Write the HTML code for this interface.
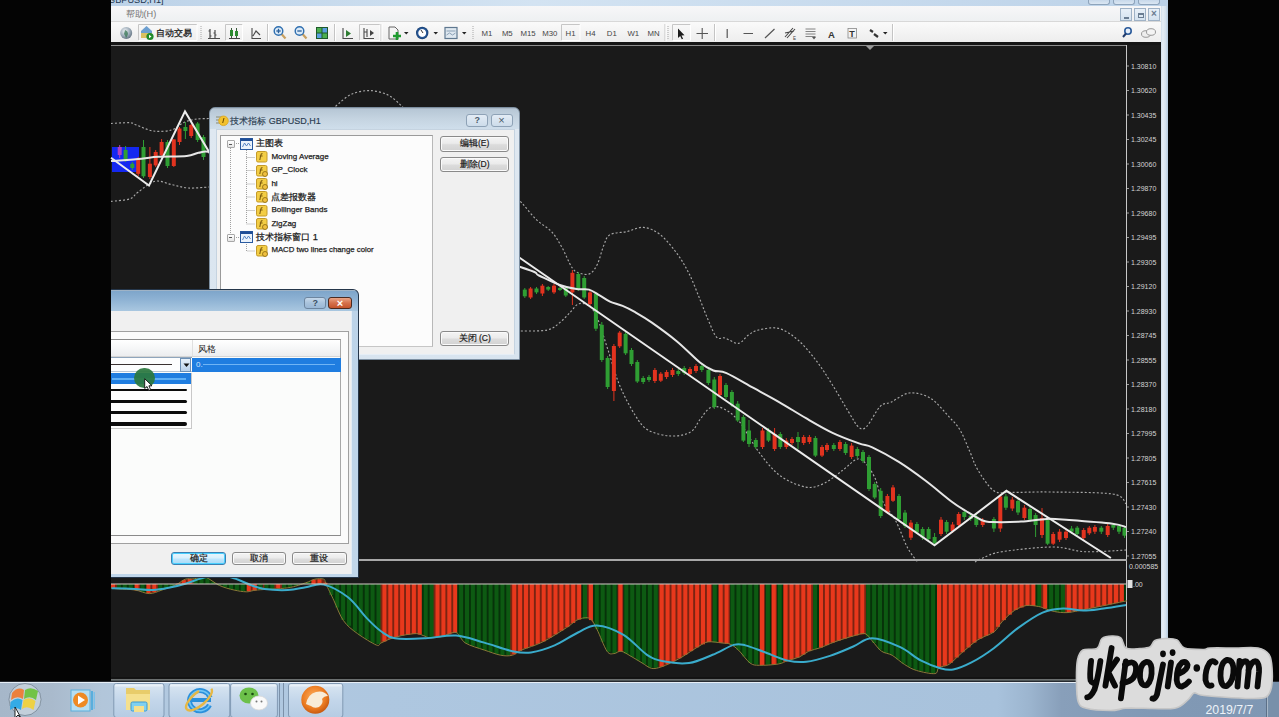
<!DOCTYPE html>
<html><head><meta charset="utf-8">
<style>
*{margin:0;padding:0;box-sizing:border-box}
html,body{width:1279px;height:717px;overflow:hidden;background:#040404;font-family:"Liberation Sans",sans-serif;position:relative}
.a{position:absolute}
#win{left:111px;top:0;width:1057px;height:681px;background:#cddeee;overflow:hidden}
#title{left:0;top:0;width:1057px;height:7px;background:linear-gradient(90deg,#bcd2e8,#d3e3f2 40%,#c4d8ec 80%,#bcd2e8)}
#menu{left:0;top:6px;width:1050px;height:16px;background:linear-gradient(#f7f7f8,#eef0f2);border-bottom:1px solid #d8d8d8}
#tool{left:0;top:22px;width:1050px;height:20px;background:linear-gradient(#fafafa,#ededed)}
#chartwin{left:0;top:42px;width:1050px;height:639px;background:#1a1a1a;border-top:3px solid #151515}
#rframe{left:1049px;top:6px;width:8px;height:675px;background:linear-gradient(90deg,#c4d5e5,#e6eef5 35%,#d5e2ee 70%,#b4c9dd)}
.tb{font-size:8px;color:#505050}
.tbtn{border:1px solid #c9c9c9;background:linear-gradient(#fbfbfb,#eeeeee)}
.sep{width:1px;height:16px;background:#c2c2c2;border-right:1px solid #fff}
.dlg{border:1px solid #5e6f80;border-radius:6px 6px 0 0;overflow:hidden}
.btn{border:1px solid #8a8a8a;border-radius:3px;background:linear-gradient(#f4f4f4 0%,#ebebeb 45%,#dcdcdc 55%,#d2d2d2 100%);font-size:8.5px;color:#202020;text-align:center;line-height:13px;-webkit-text-stroke:0.2px #202020;box-shadow:inset 0 0 0 1px #fafafa}
.row{font-size:8px;color:#1e1e1e;line-height:10px;white-space:nowrap;-webkit-text-stroke:0.25px #1e1e1e}
#taskbar{left:0;top:681px;width:1279px;height:36px;background:linear-gradient(90deg,#a6b7c9 0%,#a9bacc 4%,#b2c6da 8%,#b2c9e0 12%,#aec7e0 30%,#a8c2dc 78%,#9cb5cf 80.5%,#889fba 83%,#8199b5 90%,#7f97b3 100%);border-top:1px solid #e8eef5}
.tbb{top:684px;height:33px;border:1px solid #8aa0b8;border-radius:3px;background:linear-gradient(#d5e3f0,#b8cde2)}
</style></head>
<body>
<div id="win" class="a">
  <div id="title" class="a"></div>
  <div class="a" style="left:-3px;top:-5px;font-size:9.2px;color:#223650;white-space:nowrap">GBPUSD,H1]</div>
  <div class="a" style="left:977px;top:0;width:22px;height:5px;border:1px solid #8ea4bb;border-top:0;border-radius:0 0 3px 3px;background:linear-gradient(#c7d8ea,#dbe7f3)"></div>
  <div class="a" style="left:1002px;top:0;width:22px;height:5px;border:1px solid #8ea4bb;border-top:0;border-radius:0 0 3px 3px;background:linear-gradient(#c7d8ea,#dbe7f3)"></div>
  <div class="a" style="left:1027px;top:0;width:22px;height:5px;border:1px solid #8ea4bb;border-top:0;border-radius:0 0 3px 3px;background:linear-gradient(#c7d8ea,#dbe7f3)"></div>
  <div id="rframe" class="a"></div>
  <div id="menu" class="a"></div>
  <div class="a" style="left:14.5px;top:8.3px;font-size:9.2px;color:#767676">帮助(H)</div>
  <div class="a" style="left:1009px;top:8px;width:12px;height:13px;border:1px solid #9fb2c6;background:linear-gradient(#e8f0f8,#d4e2ef)"><div class="a" style="left:3px;top:8px;width:5px;height:2px;background:#6a7d92"></div></div>
  <div class="a" style="left:1023px;top:8px;width:12px;height:13px;border:1px solid #9fb2c6;background:linear-gradient(#e8f0f8,#d4e2ef)"><div class="a" style="left:3px;top:4px;width:6px;height:5px;border:1px solid #6a7d92;border-top-width:2px"></div></div>
  <div class="a" style="left:1037px;top:8px;width:12px;height:13px;border:1px solid #9fb2c6;background:linear-gradient(#e8f0f8,#d4e2ef);font-size:10px;line-height:10px;text-align:center;color:#6a7d92;font-weight:bold">×</div>
  <div id="tool" class="a"></div>
  
  <div id="chartwin" class="a"></div>
</div>
<svg class="a" style="left:0;top:0" width="1279" height="46" viewBox="0 0 1279 46">
<path d="M138.5,40.5 V24.5 H197" fill="none" stroke="#c6c6c6" stroke-width="1"/>
<path d="M197,24.5 V40.5 H138.5" fill="none" stroke="#ffffff" stroke-width="1"/>
<path d="M225.5,40.5 V24.5 H242.5" fill="none" stroke="#c6c6c6" stroke-width="1"/>
<path d="M242.5,24.5 V40.5 H225.5" fill="none" stroke="#ffffff" stroke-width="1"/>
<path d="M359.5,40.5 V24.5 H380" fill="none" stroke="#c6c6c6" stroke-width="1"/>
<path d="M380,24.5 V40.5 H359.5" fill="none" stroke="#ffffff" stroke-width="1"/>
<path d="M561.5,40.5 V24.5 H580" fill="none" stroke="#c6c6c6" stroke-width="1"/>
<path d="M580,24.5 V40.5 H561.5" fill="none" stroke="#ffffff" stroke-width="1"/>
<path d="M672.5,40.5 V24.5 H690.5" fill="none" stroke="#c6c6c6" stroke-width="1"/>
<path d="M690.5,24.5 V40.5 H672.5" fill="none" stroke="#ffffff" stroke-width="1"/>
<line x1="267.5" y1="24" x2="267.5" y2="41" stroke="#c4c4c4"/><line x1="268.5" y1="24" x2="268.5" y2="41" stroke="#fff"/>
<line x1="334.5" y1="24" x2="334.5" y2="41" stroke="#c4c4c4"/><line x1="335.5" y1="24" x2="335.5" y2="41" stroke="#fff"/>
<line x1="381" y1="24" x2="381" y2="41" stroke="#c4c4c4"/><line x1="382" y1="24" x2="382" y2="41" stroke="#fff"/>
<line x1="665" y1="24" x2="665" y2="41" stroke="#c4c4c4"/><line x1="666" y1="24" x2="666" y2="41" stroke="#fff"/>
<line x1="714.5" y1="24" x2="714.5" y2="41" stroke="#c4c4c4"/><line x1="715.5" y1="24" x2="715.5" y2="41" stroke="#fff"/>
<line x1="892.5" y1="24" x2="892.5" y2="41" stroke="#c4c4c4"/><line x1="893.5" y1="24" x2="893.5" y2="41" stroke="#fff"/>
<line x1="201" y1="26" x2="201" y2="40" stroke="#a8a8a8" stroke-dasharray="1 1"/>
<line x1="473" y1="26" x2="473" y2="40" stroke="#a8a8a8" stroke-dasharray="1 1"/>
<line x1="668" y1="26" x2="668" y2="40" stroke="#a8a8a8" stroke-dasharray="1 1"/>
<defs><radialGradient id="glb" cx="0.4" cy="0.35" r="0.7"><stop offset="0" stop-color="#f2f5f8"/><stop offset="0.6" stop-color="#9aa9b6"/><stop offset="1" stop-color="#5e6e7c"/></radialGradient><radialGradient id="clk" cx="0.5" cy="0.5" r="0.5"><stop offset="0.55" stop-color="#ffffff"/><stop offset="0.7" stop-color="#2a5a9a"/><stop offset="1" stop-color="#163e72"/></radialGradient></defs>
<circle cx="126.2" cy="33" r="6" fill="url(#glb)"/><path d="M125,30 q3,1 3,4 q-1,3 -2,4 q-1,-3 -2,-4 z" fill="#3d7a5a" opacity="0.8"/>
<path d="M141,31 l5.5,-5 l5.5,5 v6 h-11 z" fill="#6c9fd0"/><path d="M141,33 h11 v5 h-11z" fill="#d9c060"/><circle cx="150" cy="36.5" r="3.6" fill="#1f8a2a"/><path d="M149,34.8 l2.5,1.7 l-2.5,1.7z" fill="#fff"/>
<text x="156" y="36.3" font-size="9.2" font-weight="bold" fill="#333" font-family="Liberation Sans">自动交易</text>
<g stroke="#4a4a4a" stroke-width="1.2" fill="none"><path d="M210,29 v9 M208.5,31 h1.5 M210,36 h1.5 M215,30 v8 M213.5,33 h1.5 M215,35 h1.5 M208,38.5 h12"/></g>
<g stroke="#3a5a3a" stroke-width="1"><path d="M231.5,28 v11 M236.5,28 v11"/></g><rect x="230" y="30" width="3" height="6" fill="#2b8a2f"/><rect x="235" y="31" width="3" height="5" fill="#2b8a2f"/><path d="M229,38.5 h11" stroke="#444"/>
<path d="M252,28 v10.5 h9 M253,36 l3,-5 l4,4" fill="none" stroke="#4a4a4a" stroke-width="1.1"/>
<line x1="281.5" y1="34" x2="285.5" y2="38.5" stroke="#c8a060" stroke-width="2.2"/>
<circle cx="278.5" cy="31" r="4.3" fill="#dbeaf7" stroke="#2f6fb0" stroke-width="1.4"/>
<path d="M276.3,31 h4.4" stroke="#2a5f9a" stroke-width="1.3"/>
<path d="M278.5,28.8 v4.4" stroke="#2a5f9a" stroke-width="1.3"/>
<line x1="302.5" y1="34" x2="306.5" y2="38.5" stroke="#c8a060" stroke-width="2.2"/>
<circle cx="299.5" cy="31" r="4.3" fill="#dbeaf7" stroke="#2f6fb0" stroke-width="1.4"/>
<path d="M297.3,31 h4.4" stroke="#2a5f9a" stroke-width="1.3"/>
<rect x="316" y="27" width="12" height="12" fill="#1e5a2a"/><rect x="317" y="28" width="4.5" height="4.5" fill="#4caf50"/><rect x="322.5" y="28" width="4.5" height="4.5" fill="#5aa0e0"/><rect x="317" y="33.5" width="4.5" height="4.5" fill="#5aa0e0"/><rect x="322.5" y="33.5" width="4.5" height="4.5" fill="#4caf50"/>
<path d="M343,28 v10.5 h10" fill="none" stroke="#4a4a4a" stroke-width="1.1"/><path d="M346,30 l5,3.5 l-5,3.5z" fill="#2e7d32"/>
<path d="M364,28 v10.5 h10 M367,29 v8 M364.5,32 h2.5" fill="none" stroke="#4a4a4a" stroke-width="1.1"/><path d="M370,30 l4,3 l-4,3z" fill="#444"/>
<path d="M389,27 h6 l3,3 v9 h-9z" fill="#f4f4f4" stroke="#666" stroke-width="1"/><path d="M397,32 v8 M393,36 h8" stroke="#1f9a2f" stroke-width="2.6"/>
<path d="M404,32 h4.5 l-2.25,2.5z" fill="#222"/>
<path d="M433.5,32 h4.5 l-2.25,2.5z" fill="#222"/>
<path d="M462,32 h4.5 l-2.25,2.5z" fill="#222"/>
<circle cx="422.2" cy="33" r="6.2" fill="url(#clk)"/><path d="M421,30 l2,3" stroke="#333" stroke-width="1"/>
<rect x="445" y="27.5" width="12" height="11" fill="#dfe8f0" stroke="#5f7890" stroke-width="1.2"/><path d="M446.5,31 h9 M446.5,35 l3,-2 l3,2 l3,-2" stroke="#8aa0b5" stroke-width="1" fill="none"/>
<g font-family="Liberation Sans" font-size="7.8" fill="#454545" text-anchor="middle">
<text x="487" y="36">M1</text>
<text x="507.3" y="36">M5</text>
<text x="528" y="36">M15</text>
<text x="549.8" y="36">M30</text>
<text x="570.6" y="36">H1</text>
<text x="590.6" y="36">H4</text>
<text x="611.8" y="36">D1</text>
<text x="633.3" y="36">W1</text>
<text x="653.6" y="36">MN</text>
</g>
<path d="M678,28.5 l0,9.5 l2.2,-2 l1.6,3.3 l1.3,-0.6 l-1.6,-3.2 l3,-0.2z" fill="#1c1c1c"/>
<path d="M702.2,28 v11 M696.5,33.5 h11.5" stroke="#555" stroke-width="1.1"/>
<path d="M727.2,29 v9 M743.5,33.5 h9.5 M765,38 l9.5,-9" stroke="#555" stroke-width="1.2" fill="none"/>
<path d="M785,37 l8,-9 M787,38 l8,-9 M785,33 l9,-2" stroke="#444" stroke-width="1.1"/><text x="793" y="40" font-size="4.5" fill="#444" font-family="Liberation Sans">E</text>
<path d="M805.5,29 h10 M805.5,31.5 h10 M805.5,34 h10 M805.5,36.5 h10" stroke="#777" stroke-width="0.9"/><path d="M812,37 h4 l-2,2.5z" fill="#555"/>
<text x="828" y="37.5" font-size="9.5" font-weight="bold" fill="#333" font-family="Liberation Sans">A</text>
<rect x="848" y="28.5" width="8.5" height="9.5" fill="none" stroke="#888" stroke-width="0.8"/><text x="849.3" y="37" font-size="9" font-weight="bold" fill="#333" font-family="Liberation Sans">T</text>
<path d="M870,30 l3,2 M874,34 l4,3" stroke="#333" stroke-width="2.2"/><path d="M883,32 h4.5 l-2.25,2.5z" fill="#222"/>
<circle cx="1128" cy="31" r="3.2" fill="#e8f0fa" stroke="#2a5a9a" stroke-width="1.6"/><line x1="1126" y1="33.5" x2="1123" y2="37" stroke="#203a6a" stroke-width="2"/>
<ellipse cx="1146" cy="34" rx="4.5" ry="3.3" fill="#eee" stroke="#999" stroke-width="1"/><ellipse cx="1151" cy="32" rx="4.5" ry="3.3" fill="#f4f4f4" stroke="#999" stroke-width="1"/>
</svg>
<svg class="a" style="left:0;top:0" width="1279" height="717" viewBox="0 0 1279 717">
<path d="M111.0,123.5 C114.1,123.4 125.6,122.5 129.8,122.7 C134.1,123.0 132.6,123.6 136.5,125.0 C140.4,126.4 147.3,130.2 153.2,131.0 C159.0,131.8 166.6,131.4 171.6,130.0 C176.6,128.6 179.5,124.5 183.4,122.7 C187.3,120.9 190.7,120.0 195.0,119.3 C199.3,118.6 206.7,118.6 209.0,118.5" fill="none" stroke="#a8a8a8" stroke-width="1.15" stroke-dasharray="2 2"/>
<path d="M330.0,112.0 C331.4,110.7 334.6,106.9 338.3,103.9 C342.0,100.9 346.7,96.2 352.0,94.0 C357.3,91.8 364.2,90.4 370.2,90.6 C376.2,90.8 382.9,92.6 388.0,95.0 C393.1,97.4 397.1,101.9 400.8,105.2 C404.5,108.5 408.5,113.4 410.0,115.0" fill="none" stroke="#a8a8a8" stroke-width="1.15" stroke-dasharray="2 2"/>
<path d="M509.0,190.0 C511.2,192.2 517.6,198.4 522.2,203.4 C526.8,208.4 531.9,215.4 536.8,220.1 C541.7,224.8 547.3,227.1 551.5,231.6 C555.7,236.1 558.4,241.2 561.9,247.3 C565.4,253.4 569.2,263.8 572.4,268.2 C575.5,272.6 577.8,272.6 580.8,273.5 C583.8,274.4 587.4,275.1 590.2,273.5 C593.0,271.9 595.2,268.7 597.5,264.0 C599.8,259.3 601.7,250.1 603.8,245.2 C605.9,240.3 606.2,237.0 610.0,234.7 C613.8,232.4 621.2,232.8 626.8,231.6 C632.4,230.4 637.9,226.9 643.5,227.4 C649.1,227.9 654.7,230.3 660.3,234.7 C665.9,239.1 672.1,247.0 677.0,253.6 C681.9,260.2 685.7,266.8 689.5,274.5 C693.3,282.2 696.9,291.9 700.0,299.6 C703.1,307.3 705.6,314.2 708.4,320.5 C711.2,326.8 713.9,334.4 716.7,337.3 C719.5,340.2 721.4,337.0 725.0,338.0 C728.6,339.0 734.5,343.9 738.4,343.4 C742.3,342.9 745.0,337.2 748.4,335.0 C751.8,332.8 753.5,331.1 758.5,330.0 C763.5,328.9 772.0,326.7 778.6,328.4 C785.2,330.1 791.7,334.5 798.0,340.0 C804.3,345.5 810.9,353.7 816.6,361.2 C822.4,368.7 827.2,376.6 832.5,385.0 C837.8,393.4 844.0,404.5 848.4,411.6 C852.8,418.7 855.9,425.1 859.0,427.5 C862.1,429.9 863.5,429.6 867.0,426.1 C870.5,422.6 876.2,410.3 880.2,406.3 C884.2,402.3 885.9,404.5 890.8,402.3 C895.7,400.1 902.8,393.7 909.4,393.0 C916.0,392.3 924.0,394.3 930.6,398.3 C937.2,402.3 944.2,411.6 949.1,416.9 C954.0,422.2 956.5,424.1 960.0,430.0 C963.5,435.9 967.0,445.3 970.0,452.0 C973.0,458.7 973.9,463.5 977.9,470.0 C981.9,476.5 988.3,487.1 993.9,490.8 C999.5,494.5 1002.1,492.2 1011.5,492.4 C1020.9,492.6 1033.2,491.7 1050.0,492.0 C1066.8,492.3 1099.8,492.1 1112.5,494.0 C1125.2,495.9 1123.8,502.1 1126.0,503.7" fill="none" stroke="#a8a8a8" stroke-width="1.15" stroke-dasharray="2 2"/>
<path d="M111.0,201.4 C114.1,201.0 125.3,200.4 129.8,198.9 C134.3,197.4 133.8,195.1 138.0,192.2 C142.2,189.3 149.4,182.6 155.0,181.3 C160.6,180.0 166.0,183.5 171.6,184.6 C177.2,185.7 182.2,187.6 188.4,188.0 C194.6,188.4 205.6,187.2 209.0,187.0" fill="none" stroke="#a8a8a8" stroke-width="1.15" stroke-dasharray="2 2"/>
<path d="M509.0,331.0 C511.2,331.0 515.8,331.2 522.2,331.0 C528.6,330.8 541.0,331.4 547.3,330.0 C553.6,328.6 556.0,325.6 559.8,322.6 C563.6,319.6 567.1,315.3 570.3,312.2 C573.4,309.1 575.6,304.9 578.7,303.8 C581.8,302.8 586.0,303.5 589.1,305.9 C592.2,308.3 594.4,311.0 597.5,318.4 C600.6,325.8 604.3,338.9 608.0,350.0 C611.7,361.1 615.0,374.2 619.5,385.0 C624.0,395.8 630.2,407.5 635.0,415.0 C639.8,422.5 642.0,426.5 648.0,430.0 C654.0,433.5 663.9,435.7 671.0,436.0 C678.1,436.3 685.8,434.8 690.6,432.0 C695.4,429.2 696.7,423.6 700.0,419.5 C703.3,415.4 706.6,409.4 710.6,407.6 C714.6,405.8 719.0,406.5 723.9,408.9 C728.8,411.3 734.1,415.1 739.8,422.2 C745.5,429.3 751.7,442.5 758.3,451.3 C764.9,460.1 771.5,469.2 779.5,475.2 C787.5,481.2 798.5,485.8 806.0,487.1 C813.5,488.4 818.4,486.0 824.6,483.1 C830.8,480.2 837.8,473.9 843.1,469.9 C848.4,465.9 852.9,460.6 856.4,459.3 C859.9,458.0 861.2,458.8 864.3,461.9 C867.4,465.0 871.9,471.3 874.9,477.8 C877.9,484.3 878.9,493.6 882.4,500.8 C885.9,508.0 891.6,513.2 895.8,521.0 C900.0,528.8 903.9,540.9 907.5,547.7 C911.1,554.5 915.9,559.6 917.6,562.0" fill="none" stroke="#a8a8a8" stroke-width="1.15" stroke-dasharray="2 2"/>
<path d="M975.0,562.0 C976.3,561.3 978.2,559.7 982.7,558.0 C987.2,556.3 990.3,553.5 1002.0,551.7 C1013.7,549.9 1039.2,547.0 1053.0,547.0 C1066.8,547.0 1072.8,551.2 1085.0,551.7 C1097.2,552.2 1119.2,550.3 1126.0,550.0" fill="none" stroke="#a8a8a8" stroke-width="1.15" stroke-dasharray="2 2"/>
<rect x="112" y="147" width="27" height="25" fill="#1428f0"/>
<line x1="119.7" y1="145" x2="119.7" y2="158" stroke="#b040c0" stroke-width="1"/>
<rect x="117.7" y="147" width="4" height="8.0" fill="#b040c0"/>
<line x1="125.6" y1="146" x2="125.6" y2="162" stroke="#2f9e33" stroke-width="1"/>
<rect x="123.6" y="150" width="4" height="10.0" fill="#2f9e33"/>
<line x1="132.3" y1="162" x2="132.3" y2="170" stroke="#2f9e33" stroke-width="1"/>
<rect x="130.3" y="163.7" width="4" height="4.3" fill="#2f9e33"/>
<line x1="138.2" y1="157" x2="138.2" y2="176" stroke="#e2331f" stroke-width="1"/>
<rect x="136.2" y="158.7" width="4" height="15.1" fill="#e2331f"/>
<line x1="143.5" y1="140" x2="143.5" y2="178" stroke="#2f9e33" stroke-width="1"/>
<rect x="141.5" y="147" width="4" height="29.3" fill="#2f9e33"/>
<line x1="149.9" y1="147" x2="149.9" y2="179" stroke="#e2331f" stroke-width="1"/>
<rect x="147.9" y="163.7" width="4" height="13.3" fill="#e2331f"/>
<line x1="155.7" y1="150" x2="155.7" y2="167" stroke="#e2331f" stroke-width="1"/>
<rect x="153.7" y="152" width="4" height="13.4" fill="#e2331f"/>
<line x1="161.6" y1="139" x2="161.6" y2="157" stroke="#e2331f" stroke-width="1"/>
<rect x="159.6" y="142" width="4" height="13.3" fill="#e2331f"/>
<line x1="167.5" y1="140" x2="167.5" y2="168" stroke="#2f9e33" stroke-width="1"/>
<rect x="165.5" y="142" width="4" height="24.0" fill="#2f9e33"/>
<line x1="173.8" y1="139" x2="173.8" y2="167" stroke="#e2331f" stroke-width="1"/>
<rect x="171.8" y="139.4" width="4" height="26.6" fill="#e2331f"/>
<line x1="179.5" y1="127" x2="179.5" y2="145" stroke="#e2331f" stroke-width="1"/>
<rect x="177.5" y="128.5" width="4" height="13.5" fill="#e2331f"/>
<line x1="185.4" y1="122" x2="185.4" y2="139" stroke="#2f9e33" stroke-width="1"/>
<rect x="183.4" y="127" width="4" height="4.0" fill="#2f9e33"/>
<line x1="191.2" y1="124" x2="191.2" y2="138" stroke="#e2331f" stroke-width="1"/>
<rect x="189.2" y="125" width="4" height="11.0" fill="#e2331f"/>
<line x1="197.6" y1="122" x2="197.6" y2="142" stroke="#2f9e33" stroke-width="1"/>
<rect x="195.6" y="123.5" width="4" height="16.5" fill="#2f9e33"/>
<line x1="203.5" y1="135" x2="203.5" y2="160" stroke="#2f9e33" stroke-width="1"/>
<rect x="201.5" y="137" width="4" height="20.0" fill="#2f9e33"/>
<line x1="524.8" y1="288" x2="524.8" y2="298" stroke="#2f9e33" stroke-width="1"/>
<rect x="522.8" y="289.6" width="4" height="6.7" fill="#2f9e33"/>
<line x1="530.6" y1="287" x2="530.6" y2="299" stroke="#e2331f" stroke-width="1"/>
<rect x="528.6" y="288.5" width="4" height="9.0" fill="#e2331f"/>
<line x1="536.5" y1="287" x2="536.5" y2="294" stroke="#2f9e33" stroke-width="1"/>
<rect x="534.5" y="288.5" width="4" height="3.9" fill="#2f9e33"/>
<line x1="542.4" y1="284" x2="542.4" y2="296" stroke="#e2331f" stroke-width="1"/>
<rect x="540.4" y="285.7" width="4" height="7.8" fill="#e2331f"/>
<line x1="548.2" y1="286" x2="548.2" y2="291" stroke="#2f9e33" stroke-width="1"/>
<rect x="546.2" y="287" width="4" height="2.6" fill="#2f9e33"/>
<line x1="554.0" y1="284" x2="554.0" y2="294" stroke="#e2331f" stroke-width="1"/>
<rect x="552.0" y="285.7" width="4" height="6.7" fill="#e2331f"/>
<line x1="560.0" y1="287" x2="560.0" y2="291" stroke="#2f9e33" stroke-width="1"/>
<rect x="558.0" y="288" width="4" height="2.0" fill="#2f9e33"/>
<line x1="565.8" y1="286" x2="565.8" y2="297" stroke="#2f9e33" stroke-width="1"/>
<rect x="563.8" y="287.7" width="4" height="7.8" fill="#2f9e33"/>
<line x1="572.4" y1="270" x2="572.4" y2="305" stroke="#e2331f" stroke-width="1"/>
<rect x="570.4" y="272.8" width="4" height="19.6" fill="#e2331f"/>
<line x1="578.3" y1="272" x2="578.3" y2="291" stroke="#2f9e33" stroke-width="1"/>
<rect x="576.3" y="274" width="4" height="15.6" fill="#2f9e33"/>
<line x1="584.2" y1="276" x2="584.2" y2="299" stroke="#2f9e33" stroke-width="1"/>
<rect x="582.2" y="278" width="4" height="19.5" fill="#2f9e33"/>
<line x1="590.0" y1="290" x2="590.0" y2="306" stroke="#e2331f" stroke-width="1"/>
<rect x="588.0" y="292.4" width="4" height="11.6" fill="#e2331f"/>
<line x1="595.9" y1="292" x2="595.9" y2="331" stroke="#2f9e33" stroke-width="1"/>
<rect x="593.9" y="293.6" width="4" height="35.1" fill="#2f9e33"/>
<line x1="601.8" y1="322" x2="601.8" y2="362" stroke="#2f9e33" stroke-width="1"/>
<rect x="599.8" y="324.8" width="4" height="35.2" fill="#2f9e33"/>
<line x1="607.6" y1="356" x2="607.6" y2="389" stroke="#2f9e33" stroke-width="1"/>
<rect x="605.6" y="358" width="4" height="29.0" fill="#2f9e33"/>
<line x1="613.9" y1="344" x2="613.9" y2="401" stroke="#e2331f" stroke-width="1"/>
<rect x="611.9" y="346" width="4" height="45.0" fill="#e2331f"/>
<line x1="619.7" y1="331" x2="619.7" y2="348" stroke="#e2331f" stroke-width="1"/>
<rect x="617.7" y="332.6" width="4" height="13.7" fill="#e2331f"/>
<line x1="625.6" y1="332" x2="625.6" y2="355" stroke="#2f9e33" stroke-width="1"/>
<rect x="623.6" y="333.8" width="4" height="19.5" fill="#2f9e33"/>
<line x1="631.5" y1="348" x2="631.5" y2="366" stroke="#2f9e33" stroke-width="1"/>
<rect x="629.5" y="350" width="4" height="14.0" fill="#2f9e33"/>
<line x1="637.3" y1="360" x2="637.3" y2="383" stroke="#2f9e33" stroke-width="1"/>
<rect x="635.3" y="362" width="4" height="19.5" fill="#2f9e33"/>
<line x1="643.2" y1="376" x2="643.2" y2="384" stroke="#2f9e33" stroke-width="1"/>
<rect x="641.2" y="378" width="4" height="4.0" fill="#2f9e33"/>
<line x1="649.0" y1="375" x2="649.0" y2="382" stroke="#2f9e33" stroke-width="1"/>
<rect x="647.0" y="377" width="4" height="3.0" fill="#2f9e33"/>
<line x1="654.9" y1="368" x2="654.9" y2="383" stroke="#e2331f" stroke-width="1"/>
<rect x="652.9" y="370" width="4" height="11.0" fill="#e2331f"/>
<line x1="660.8" y1="372" x2="660.8" y2="382" stroke="#e2331f" stroke-width="1"/>
<rect x="658.8" y="373.7" width="4" height="7.0" fill="#e2331f"/>
<line x1="666.6" y1="370" x2="666.6" y2="379" stroke="#e2331f" stroke-width="1"/>
<rect x="664.6" y="372" width="4" height="5.0" fill="#e2331f"/>
<line x1="672.5" y1="368" x2="672.5" y2="377" stroke="#e2331f" stroke-width="1"/>
<rect x="670.5" y="370" width="4" height="5.0" fill="#e2331f"/>
<line x1="678.3" y1="369" x2="678.3" y2="376" stroke="#2f9e33" stroke-width="1"/>
<rect x="676.3" y="371" width="4" height="3.0" fill="#2f9e33"/>
<line x1="684.2" y1="366" x2="684.2" y2="375" stroke="#2f9e33" stroke-width="1"/>
<rect x="682.2" y="368" width="4" height="5.0" fill="#2f9e33"/>
<line x1="690.0" y1="367" x2="690.0" y2="376" stroke="#e2331f" stroke-width="1"/>
<rect x="688.0" y="369" width="4" height="5.0" fill="#e2331f"/>
<line x1="696.0" y1="364" x2="696.0" y2="373" stroke="#e2331f" stroke-width="1"/>
<rect x="694.0" y="366" width="4" height="5.0" fill="#e2331f"/>
<line x1="701.8" y1="364" x2="701.8" y2="372" stroke="#2f9e33" stroke-width="1"/>
<rect x="699.8" y="366" width="4" height="4.0" fill="#2f9e33"/>
<line x1="708.4" y1="368" x2="708.4" y2="385" stroke="#2f9e33" stroke-width="1"/>
<rect x="706.4" y="370" width="4" height="13.0" fill="#2f9e33"/>
<line x1="714.3" y1="377" x2="714.3" y2="409" stroke="#2f9e33" stroke-width="1"/>
<rect x="712.3" y="379.5" width="4" height="27.5" fill="#2f9e33"/>
<line x1="720.0" y1="374" x2="720.0" y2="397" stroke="#e2331f" stroke-width="1"/>
<rect x="718.0" y="376" width="4" height="19.0" fill="#e2331f"/>
<line x1="726.0" y1="383" x2="726.0" y2="399" stroke="#2f9e33" stroke-width="1"/>
<rect x="724.0" y="385" width="4" height="12.0" fill="#2f9e33"/>
<line x1="731.9" y1="390" x2="731.9" y2="407" stroke="#2f9e33" stroke-width="1"/>
<rect x="729.9" y="392" width="4" height="13.4" fill="#2f9e33"/>
<line x1="737.7" y1="401" x2="737.7" y2="422" stroke="#2f9e33" stroke-width="1"/>
<rect x="735.7" y="403.7" width="4" height="16.8" fill="#2f9e33"/>
<line x1="743.4" y1="415" x2="743.4" y2="442" stroke="#2f9e33" stroke-width="1"/>
<rect x="741.4" y="417" width="4" height="23.6" fill="#2f9e33"/>
<line x1="749.0" y1="420" x2="749.0" y2="447" stroke="#2f9e33" stroke-width="1"/>
<rect x="747.0" y="430.5" width="4" height="13.5" fill="#2f9e33"/>
<line x1="755.8" y1="438" x2="755.8" y2="449" stroke="#2f9e33" stroke-width="1"/>
<rect x="753.8" y="440" width="4" height="7.0" fill="#2f9e33"/>
<line x1="762.5" y1="428" x2="762.5" y2="449" stroke="#e2331f" stroke-width="1"/>
<rect x="760.5" y="430.5" width="4" height="16.5" fill="#e2331f"/>
<line x1="768.5" y1="428" x2="768.5" y2="442" stroke="#2f9e33" stroke-width="1"/>
<rect x="766.5" y="430.5" width="4" height="10.1" fill="#2f9e33"/>
<line x1="774.6" y1="428" x2="774.6" y2="451" stroke="#e2331f" stroke-width="1"/>
<rect x="772.6" y="434" width="4" height="15.0" fill="#e2331f"/>
<line x1="780.3" y1="432" x2="780.3" y2="449" stroke="#2f9e33" stroke-width="1"/>
<rect x="778.3" y="434" width="4" height="13.0" fill="#2f9e33"/>
<line x1="786.3" y1="438" x2="786.3" y2="449" stroke="#e2331f" stroke-width="1"/>
<rect x="784.3" y="440.6" width="4" height="6.4" fill="#e2331f"/>
<line x1="792.0" y1="437" x2="792.0" y2="445" stroke="#e2331f" stroke-width="1"/>
<rect x="790.0" y="439" width="4" height="4.0" fill="#e2331f"/>
<line x1="798.0" y1="432" x2="798.0" y2="449" stroke="#2f9e33" stroke-width="1"/>
<rect x="796.0" y="437" width="4" height="5.0" fill="#2f9e33"/>
<line x1="803.7" y1="435" x2="803.7" y2="445" stroke="#e2331f" stroke-width="1"/>
<rect x="801.7" y="437" width="4" height="6.0" fill="#e2331f"/>
<line x1="809.4" y1="435" x2="809.4" y2="444" stroke="#e2331f" stroke-width="1"/>
<rect x="807.4" y="437" width="4" height="5.0" fill="#e2331f"/>
<line x1="815.4" y1="436" x2="815.4" y2="457" stroke="#2f9e33" stroke-width="1"/>
<rect x="813.4" y="438" width="4" height="17.6" fill="#2f9e33"/>
<line x1="822.0" y1="445" x2="822.0" y2="457" stroke="#e2331f" stroke-width="1"/>
<rect x="820.0" y="447" width="4" height="8.6" fill="#e2331f"/>
<line x1="827.0" y1="443" x2="827.0" y2="452" stroke="#e2331f" stroke-width="1"/>
<rect x="825.0" y="445" width="4" height="5.0" fill="#e2331f"/>
<line x1="833.8" y1="443" x2="833.8" y2="451" stroke="#2f9e33" stroke-width="1"/>
<rect x="831.8" y="445" width="4" height="4.0" fill="#2f9e33"/>
<line x1="839.9" y1="440" x2="839.9" y2="451" stroke="#e2331f" stroke-width="1"/>
<rect x="837.9" y="442" width="4" height="7.0" fill="#e2331f"/>
<line x1="845.6" y1="442" x2="845.6" y2="455" stroke="#2f9e33" stroke-width="1"/>
<rect x="843.6" y="444" width="4" height="9.0" fill="#2f9e33"/>
<line x1="851.6" y1="443" x2="851.6" y2="459" stroke="#e2331f" stroke-width="1"/>
<rect x="849.6" y="445.6" width="4" height="11.4" fill="#e2331f"/>
<line x1="857.3" y1="447" x2="857.3" y2="458" stroke="#2f9e33" stroke-width="1"/>
<rect x="855.3" y="449" width="4" height="7.0" fill="#2f9e33"/>
<line x1="863.0" y1="450" x2="863.0" y2="463" stroke="#2f9e33" stroke-width="1"/>
<rect x="861.0" y="452" width="4" height="9.0" fill="#2f9e33"/>
<line x1="869.0" y1="455" x2="869.0" y2="491" stroke="#2f9e33" stroke-width="1"/>
<rect x="867.0" y="457" width="4" height="32.0" fill="#2f9e33"/>
<line x1="874.7" y1="482" x2="874.7" y2="499" stroke="#2f9e33" stroke-width="1"/>
<rect x="872.7" y="484" width="4" height="13.5" fill="#2f9e33"/>
<line x1="880.7" y1="488" x2="880.7" y2="518" stroke="#2f9e33" stroke-width="1"/>
<rect x="878.7" y="490.8" width="4" height="25.2" fill="#2f9e33"/>
<line x1="887.4" y1="494" x2="887.4" y2="514" stroke="#e2331f" stroke-width="1"/>
<rect x="885.4" y="496" width="4" height="16.6" fill="#e2331f"/>
<line x1="893.0" y1="485" x2="893.0" y2="502" stroke="#e2331f" stroke-width="1"/>
<rect x="891.0" y="487.4" width="4" height="13.4" fill="#e2331f"/>
<line x1="899.0" y1="494" x2="899.0" y2="521" stroke="#2f9e33" stroke-width="1"/>
<rect x="897.0" y="496" width="4" height="23.0" fill="#2f9e33"/>
<line x1="905.0" y1="510" x2="905.0" y2="528" stroke="#2f9e33" stroke-width="1"/>
<rect x="903.0" y="512.6" width="4" height="13.4" fill="#2f9e33"/>
<line x1="910.9" y1="520" x2="910.9" y2="540" stroke="#e2331f" stroke-width="1"/>
<rect x="908.9" y="522.6" width="4" height="15.1" fill="#e2331f"/>
<line x1="916.9" y1="522" x2="916.9" y2="534" stroke="#2f9e33" stroke-width="1"/>
<rect x="914.9" y="524" width="4" height="8.6" fill="#2f9e33"/>
<line x1="922.6" y1="527" x2="922.6" y2="540" stroke="#2f9e33" stroke-width="1"/>
<rect x="920.6" y="529" width="4" height="8.7" fill="#2f9e33"/>
<line x1="928.6" y1="527" x2="928.6" y2="541" stroke="#2f9e33" stroke-width="1"/>
<rect x="926.6" y="529" width="4" height="10.0" fill="#2f9e33"/>
<line x1="934.6" y1="533" x2="934.6" y2="545" stroke="#2f9e33" stroke-width="1"/>
<rect x="932.6" y="537" width="4" height="6.0" fill="#2f9e33"/>
<line x1="941.0" y1="517" x2="941.0" y2="536" stroke="#e2331f" stroke-width="1"/>
<rect x="939.0" y="519.7" width="4" height="14.3" fill="#e2331f"/>
<line x1="946.6" y1="520" x2="946.6" y2="534" stroke="#2f9e33" stroke-width="1"/>
<rect x="944.6" y="522" width="4" height="9.7" fill="#2f9e33"/>
<line x1="952.6" y1="522" x2="952.6" y2="533" stroke="#e2331f" stroke-width="1"/>
<rect x="950.6" y="524.5" width="4" height="6.5" fill="#e2331f"/>
<line x1="958.7" y1="512" x2="958.7" y2="527" stroke="#e2331f" stroke-width="1"/>
<rect x="956.7" y="514" width="4" height="11.0" fill="#e2331f"/>
<line x1="964.3" y1="509" x2="964.3" y2="520" stroke="#2f9e33" stroke-width="1"/>
<rect x="962.3" y="512" width="4" height="5.0" fill="#2f9e33"/>
<line x1="970.7" y1="514" x2="970.7" y2="521" stroke="#2f9e33" stroke-width="1"/>
<rect x="968.7" y="515.7" width="4" height="3.3" fill="#2f9e33"/>
<line x1="976.3" y1="514" x2="976.3" y2="527" stroke="#2f9e33" stroke-width="1"/>
<rect x="974.3" y="516.5" width="4" height="8.5" fill="#2f9e33"/>
<line x1="982.7" y1="518" x2="982.7" y2="527" stroke="#e2331f" stroke-width="1"/>
<rect x="980.7" y="520.5" width="4" height="4.5" fill="#e2331f"/>
<line x1="993.9" y1="517" x2="993.9" y2="532" stroke="#2f9e33" stroke-width="1"/>
<rect x="991.9" y="519" width="4" height="9.5" fill="#2f9e33"/>
<line x1="1000.3" y1="494" x2="1000.3" y2="532" stroke="#e2331f" stroke-width="1"/>
<rect x="998.3" y="496.4" width="4" height="32.1" fill="#e2331f"/>
<line x1="1005.9" y1="494" x2="1005.9" y2="510" stroke="#2f9e33" stroke-width="1"/>
<rect x="1003.9" y="496.4" width="4" height="11.3" fill="#2f9e33"/>
<line x1="1012.3" y1="497" x2="1012.3" y2="511" stroke="#e2331f" stroke-width="1"/>
<rect x="1010.3" y="499.6" width="4" height="8.9" fill="#e2331f"/>
<line x1="1018.0" y1="499" x2="1018.0" y2="515" stroke="#2f9e33" stroke-width="1"/>
<rect x="1016.0" y="501" width="4" height="11.5" fill="#2f9e33"/>
<line x1="1024.4" y1="505" x2="1024.4" y2="520" stroke="#e2331f" stroke-width="1"/>
<rect x="1022.4" y="507.7" width="4" height="10.3" fill="#e2331f"/>
<line x1="1030.0" y1="507" x2="1030.0" y2="522" stroke="#2f9e33" stroke-width="1"/>
<rect x="1028.0" y="509" width="4" height="10.7" fill="#2f9e33"/>
<line x1="1035.6" y1="513" x2="1035.6" y2="537" stroke="#2f9e33" stroke-width="1"/>
<rect x="1033.6" y="515" width="4" height="10.0" fill="#2f9e33"/>
<line x1="1042.0" y1="508" x2="1042.0" y2="538" stroke="#e2331f" stroke-width="1"/>
<rect x="1040.0" y="518" width="4" height="17.0" fill="#e2331f"/>
<line x1="1047.6" y1="517" x2="1047.6" y2="545" stroke="#2f9e33" stroke-width="1"/>
<rect x="1045.6" y="519.7" width="4" height="24.0" fill="#2f9e33"/>
<line x1="1053.2" y1="532" x2="1053.2" y2="545" stroke="#e2331f" stroke-width="1"/>
<rect x="1051.2" y="534" width="4" height="9.7" fill="#e2331f"/>
<line x1="1059.6" y1="529" x2="1059.6" y2="542" stroke="#e2331f" stroke-width="1"/>
<rect x="1057.6" y="531.7" width="4" height="8.0" fill="#e2331f"/>
<line x1="1066.0" y1="529" x2="1066.0" y2="540" stroke="#e2331f" stroke-width="1"/>
<rect x="1064.0" y="531.7" width="4" height="6.3" fill="#e2331f"/>
<line x1="1071.6" y1="526" x2="1071.6" y2="534" stroke="#2f9e33" stroke-width="1"/>
<rect x="1069.6" y="528.5" width="4" height="3.2" fill="#2f9e33"/>
<line x1="1077.2" y1="526" x2="1077.2" y2="536" stroke="#2f9e33" stroke-width="1"/>
<rect x="1075.2" y="527.7" width="4" height="6.3" fill="#2f9e33"/>
<line x1="1083.7" y1="528" x2="1083.7" y2="540" stroke="#e2331f" stroke-width="1"/>
<rect x="1081.7" y="530" width="4" height="8.0" fill="#e2331f"/>
<line x1="1089.3" y1="526" x2="1089.3" y2="535" stroke="#e2331f" stroke-width="1"/>
<rect x="1087.3" y="527.7" width="4" height="5.6" fill="#e2331f"/>
<line x1="1094.9" y1="525" x2="1094.9" y2="534" stroke="#e2331f" stroke-width="1"/>
<rect x="1092.9" y="527" width="4" height="4.7" fill="#e2331f"/>
<line x1="1101.3" y1="526" x2="1101.3" y2="534" stroke="#2f9e33" stroke-width="1"/>
<rect x="1099.3" y="527.7" width="4" height="4.0" fill="#2f9e33"/>
<line x1="1107.7" y1="524" x2="1107.7" y2="537" stroke="#e2331f" stroke-width="1"/>
<rect x="1105.7" y="526" width="4" height="9.0" fill="#e2331f"/>
<line x1="1113.3" y1="523" x2="1113.3" y2="530" stroke="#2f9e33" stroke-width="1"/>
<rect x="1111.3" y="525" width="4" height="2.7" fill="#2f9e33"/>
<line x1="1119.0" y1="524" x2="1119.0" y2="534" stroke="#2f9e33" stroke-width="1"/>
<rect x="1117.0" y="526" width="4" height="5.7" fill="#2f9e33"/>
<line x1="1124.5" y1="526" x2="1124.5" y2="538" stroke="#2f9e33" stroke-width="1"/>
<rect x="1122.5" y="527.7" width="4" height="8.0" fill="#2f9e33"/>
<path d="M111.0,161.0 C116.1,160.6 133.7,159.4 141.5,158.7 C149.3,158.0 150.5,157.1 158.0,156.7 C165.5,156.2 179.9,156.7 186.7,156.0 C193.4,155.3 194.6,153.5 198.5,152.8 C202.4,152.1 203.1,150.8 210.0,152.0 C216.9,153.2 225.0,153.7 240.0,160.0 C255.0,166.3 273.3,178.3 300.0,190.0 C326.7,201.7 363.1,217.1 400.0,230.0 C436.9,242.9 498.0,259.6 521.1,267.2 C544.2,274.8 532.5,272.5 538.9,275.5 C545.3,278.5 553.5,282.7 559.8,285.0 C566.1,287.3 571.7,288.3 576.6,289.1 C581.5,289.9 585.3,288.6 589.1,289.6 C592.9,290.7 596.1,293.4 599.6,295.4 C603.1,297.4 606.2,299.9 610.0,301.7 C613.8,303.4 618.4,304.1 622.6,305.9 C626.8,307.6 630.3,309.4 635.2,312.2 C640.1,315.0 644.9,317.7 651.9,322.6 C658.9,327.5 669.0,334.8 677.0,341.4 C685.0,348.0 694.0,357.6 700.0,362.5 C706.0,367.4 708.9,368.7 713.3,370.5 C717.7,372.3 719.9,370.2 726.5,373.1 C733.1,376.0 744.2,382.8 753.0,387.7 C761.8,392.6 770.7,397.2 779.5,402.3 C788.3,407.4 797.2,413.1 806.0,418.2 C814.8,423.3 823.7,428.6 832.5,432.8 C841.3,437.0 852.4,441.0 859.0,443.4 C865.6,445.8 865.7,444.2 872.3,447.3 C878.9,450.4 890.0,456.4 898.8,461.9 C907.6,467.4 916.5,473.9 925.3,480.5 C934.1,487.1 945.0,496.6 951.8,501.7 C958.6,506.8 960.9,507.9 966.0,511.0 C971.1,514.1 978.3,518.7 982.7,520.5 C987.1,522.3 985.9,521.8 992.3,522.0 C998.7,522.2 1011.9,522.1 1021.0,521.6 C1030.1,521.1 1038.8,519.2 1046.8,518.9 C1054.8,518.6 1058.2,519.2 1069.2,520.0 C1080.2,520.8 1103.0,522.5 1112.5,523.7 C1122.0,524.9 1123.8,526.5 1126.0,527.0" fill="none" stroke="#e6e6e6" stroke-width="2"/>
<polyline points="111.0,157.8 149.0,185.5 185.0,111.4 208.5,151.0 230.0,190.0 300.0,110.0 520.0,258.0 934.5,545.3 1006.4,490.8 1110.9,558.0" fill="none" stroke="#ececec" stroke-width="2"/>
<line x1="111" y1="45.5" x2="1127" y2="45.5" stroke="#8c8c8c" stroke-width="1"/>
<line x1="1126.5" y1="45" x2="1126.5" y2="679" stroke="#c8c8c8" stroke-width="1"/>
<line x1="111" y1="560" x2="1127" y2="560" stroke="#a8a8a8" stroke-width="2"/>
<polygon points="866,46 874,46 870,50" fill="#9a9a9a"/>
<polygon points="326.0,584.0 326.0,584.0 328.0,588.2 330.0,592.4 332.0,596.6 334.0,600.8 336.0,605.0 338.0,609.2 340.0,613.4 342.0,617.6 344.0,621.2 346.0,623.0 348.0,624.8 350.0,626.7 352.0,628.5 354.0,630.4 356.0,632.2 358.0,633.9 360.0,635.1 362.0,636.3 364.0,637.5 366.0,638.8 368.0,640.0 370.0,641.2 372.0,642.4 374.0,643.6 376.0,644.8 378.0,644.3 380.0,643.4 380.0,584.0" fill="#07320a"/>
<polygon points="380.0,584.0 380.0,643.4 382.0,642.6 384.0,641.7 386.0,640.8 388.0,639.9 390.0,639.0 392.0,638.3 394.0,637.8 396.0,637.2 398.0,636.6 400.0,636.1 402.0,635.5 404.0,635.2 406.0,635.0 408.0,634.7 410.0,634.4 412.0,634.2 414.0,633.9 416.0,633.6 418.0,634.1 420.0,634.6 421.0,634.9 421.0,584.0" fill="#7a2412"/>
<polygon points="421.0,584.0 421.0,634.9 423.0,635.4 425.0,636.1 427.0,636.8 429.0,637.5 431.0,637.8 432.6,637.6 432.6,584.0" fill="#07320a"/>
<polygon points="432.6,584.0 432.6,637.6 434.6,637.4 436.6,637.1 438.6,636.9 440.6,636.7 442.6,636.3 444.6,635.8 446.6,635.2 448.6,634.6 450.6,634.0 452.6,633.5 454.6,632.9 456.0,632.5 456.0,584.0" fill="#7a2412"/>
<polygon points="456.0,584.0 456.0,632.5 458.0,634.7 460.0,637.0 462.0,639.2 464.0,641.4 466.0,643.2 468.0,644.0 470.0,644.7 472.0,645.5 474.0,646.2 476.0,646.9 478.0,647.7 480.0,648.4 482.0,649.2 484.0,649.9 486.0,650.6 488.0,651.2 490.0,651.8 492.0,652.5 494.0,653.1 496.0,653.7 498.0,654.4 500.0,655.0 502.0,655.2 504.0,655.2 506.0,655.2 508.0,655.2 510.0,655.2 510.0,584.0" fill="#07320a"/>
<polygon points="510.0,584.0 510.0,655.2 512.0,655.2 514.0,654.3 516.0,653.2 518.0,652.1 520.0,651.0 522.0,649.9 524.0,649.1 526.0,648.3 528.0,647.6 530.0,646.8 532.0,646.0 534.0,645.3 536.0,644.5 538.0,643.7 540.0,643.0 542.0,642.2 544.0,641.2 546.0,640.0 548.0,638.8 550.0,637.6 552.0,636.4 554.0,635.2 556.0,634.0 558.0,632.8 560.0,631.6 562.0,630.4 564.0,629.2 566.0,628.0 568.0,626.6 570.0,625.2 572.0,623.8 574.0,622.4 576.0,621.0 578.0,619.6 580.0,619.4 581.6,619.2 581.6,584.0" fill="#7a2412"/>
<polygon points="581.6,584.0 581.6,619.2 583.6,619.0 585.6,618.8 587.4,618.6 587.4,584.0" fill="#07320a"/>
<polygon points="587.4,584.0 587.4,618.6 589.4,618.4 591.4,620.8 593.3,623.7 593.3,584.0" fill="#7a2412"/>
<polygon points="593.3,584.0 593.3,623.7 595.3,626.7 597.3,630.1 599.3,634.4 601.3,638.8 603.3,643.1 605.3,647.5 607.3,651.3 609.3,652.0 611.3,652.7 613.3,653.4 615.3,653.2 617.3,652.5 617.6,652.4 617.6,584.0" fill="#07320a"/>
<polygon points="617.6,584.0 617.6,652.4 619.6,651.7 621.6,651.5 623.5,652.5 623.5,584.0" fill="#7a2412"/>
<polygon points="623.5,584.0 623.5,652.5 625.5,653.5 627.5,654.5 629.5,655.5 631.5,656.6 633.5,657.8 635.5,659.0 637.5,660.2 639.5,661.4 641.5,662.6 643.5,663.7 645.5,664.9 647.5,666.0 649.5,667.2 651.5,668.3 653.5,668.1 655.5,667.8 657.5,667.5 658.6,667.4 658.6,584.0" fill="#07320a"/>
<polygon points="658.6,584.0 658.6,667.4 660.6,667.1 662.6,666.3 664.6,665.5 666.6,664.6 668.6,663.8 670.6,662.9 672.6,661.9 674.6,660.8 676.6,659.8 678.6,658.8 680.6,657.7 682.6,656.6 684.6,655.3 686.6,654.1 688.6,652.8 690.6,651.5 692.6,650.3 694.6,649.0 696.6,647.7 698.6,646.5 700.6,645.5 702.6,644.5 704.6,643.5 706.6,642.6 708.6,641.9 710.6,642.1 712.6,642.3 712.6,584.0" fill="#7a2412"/>
<polygon points="712.6,584.0 712.6,642.3 714.6,642.4 716.6,642.6 718.5,642.7 718.5,584.0" fill="#07320a"/>
<polygon points="718.5,584.0 718.5,642.7 720.5,642.9 722.5,643.1 724.5,643.4 726.5,643.7 728.5,644.0 730.2,644.2 730.2,584.0" fill="#7a2412"/>
<polygon points="730.2,584.0 730.2,644.2 732.2,645.6 734.2,647.0 736.2,648.4 738.2,649.9 740.2,652.0 742.2,654.3 744.2,656.5 746.2,658.7 748.2,661.0 750.2,663.0 752.2,663.5 754.2,664.0 756.2,664.5 758.2,665.0 759.5,665.3 759.5,584.0" fill="#07320a"/>
<polygon points="759.5,584.0 759.5,665.3 761.5,665.2 763.5,665.0 765.4,664.9 765.4,584.0" fill="#7a2412"/>
<polygon points="765.4,584.0 765.4,664.9 767.4,664.8 769.4,664.6 771.2,664.5 771.2,584.0" fill="#07320a"/>
<polygon points="771.2,584.0 771.2,664.5 773.2,664.4 775.2,664.2 777.0,664.1 777.0,584.0" fill="#7a2412"/>
<polygon points="777.0,584.0 777.0,664.1 779.0,663.7 781.0,663.0 783.0,662.3 783.0,584.0" fill="#07320a"/>
<polygon points="783.0,584.0 783.0,662.3 785.0,661.6 787.0,660.9 789.0,660.2 791.0,659.6 793.0,659.0 795.0,658.4 797.0,657.7 799.0,657.1 801.0,656.0 803.0,654.8 805.0,653.5 807.0,652.3 809.0,651.1 811.0,650.5 813.0,649.9 813.5,649.8 813.5,584.0" fill="#7a2412"/>
<polygon points="813.5,584.0 813.5,649.8 815.5,649.2 817.5,648.6 819.3,648.1 819.3,584.0" fill="#07320a"/>
<polygon points="819.3,584.0 819.3,648.1 821.3,647.4 823.3,646.5 825.3,645.7 827.3,644.9 829.3,644.1 831.3,643.3 833.3,642.4 835.3,641.7 837.3,641.0 839.3,640.4 841.3,639.8 843.3,639.2 845.3,638.5 847.3,637.9 849.3,637.3 851.3,636.6 853.3,636.0 855.3,635.6 857.3,635.2 859.3,634.8 861.3,634.4 863.3,633.9 865.3,633.9 866.2,634.8 866.2,584.0" fill="#7a2412"/>
<polygon points="866.2,584.0 866.2,634.8 868.2,636.8 870.2,638.9 872.2,640.9 874.2,643.1 876.2,645.3 878.2,647.6 880.2,649.8 882.2,651.5 884.2,652.2 886.2,653.0 888.2,653.8 890.2,654.5 892.2,655.3 894.2,656.8 896.2,658.3 898.2,659.8 900.2,661.3 902.2,662.8 904.2,664.3 906.2,665.3 908.2,666.3 910.2,667.3 912.2,668.3 914.2,669.3 916.2,670.3 918.2,670.8 920.2,671.1 922.2,671.4 924.2,671.8 926.2,672.1 928.2,672.5 930.2,672.8 932.2,673.1 934.2,673.5 936.2,671.7 938.0,669.0 938.0,584.0" fill="#07320a"/>
<polygon points="938.0,584.0 938.0,669.0 940.0,667.2 942.0,666.6 944.0,666.0 946.0,665.3 948.0,664.7 950.0,663.5 952.0,661.7 954.0,659.9 956.0,658.1 958.0,656.3 960.0,654.5 962.0,652.7 964.0,651.1 966.0,649.5 968.0,647.8 970.0,646.2 972.0,644.6 974.0,642.9 976.0,641.3 978.0,639.8 980.0,638.8 982.0,637.8 984.0,636.8 986.0,635.9 988.0,634.9 990.0,633.9 992.0,632.9 994.0,631.8 996.0,629.3 998.0,626.8 1000.0,624.3 1002.0,621.8 1004.0,620.0 1006.0,618.1 1008.0,616.3 1010.0,614.5 1012.0,612.6 1014.0,610.8 1016.0,609.8 1018.0,609.0 1020.0,608.2 1022.0,607.3 1024.0,606.5 1026.0,605.7 1028.0,605.6 1030.0,605.8 1032.0,606.0 1033.5,606.1 1033.5,584.0" fill="#7a2412"/>
<polygon points="1033.5,584.0 1033.5,606.1 1035.5,606.2 1037.5,606.4 1039.5,606.8 1039.6,606.8 1039.6,584.0" fill="#07320a"/>
<polygon points="1039.6,584.0 1039.6,606.8 1041.6,607.5 1043.6,608.1 1045.6,608.8 1045.7,608.8 1045.7,584.0" fill="#7a2412"/>
<polygon points="1045.7,584.0 1045.7,608.8 1047.7,609.4 1049.7,610.0 1051.7,610.6 1053.7,611.3 1055.7,611.7 1057.7,611.8 1059.7,612.0 1061.7,612.2 1063.0,612.3 1063.0,584.0" fill="#07320a"/>
<polygon points="1063.0,584.0 1063.0,612.3 1065.0,612.4 1067.0,612.6 1069.0,612.3 1071.0,611.9 1073.0,611.6 1075.0,611.3 1077.0,611.0 1079.0,610.6 1081.0,610.2 1083.0,609.8 1085.0,609.4 1087.0,609.0 1089.0,608.6 1091.0,608.2 1093.0,607.8 1095.0,607.4 1097.0,607.0 1099.0,606.6 1101.0,606.2 1103.0,605.8 1105.0,605.4 1107.0,605.0 1109.0,604.5 1111.0,604.1 1113.0,603.7 1115.0,603.3 1117.0,602.9 1119.0,602.4 1121.0,602.0 1123.0,601.6 1123.0,584.0" fill="#7a2412"/>
<polygon points="1123.0,584.0 1123.0,601.6 1125.0,601.2 1126.0,601.0 1126.0,584.0" fill="#07320a"/>
<polygon points="111.0,584.0 111.0,588.0 113.0,588.3 115.0,588.5 117.0,588.8 118.8,589.0 118.8,584.0" fill="#7a2412"/>
<polygon points="118.8,584.0 118.8,589.0 120.8,589.1 122.8,589.2 124.8,589.4 126.8,589.5 128.8,589.6 130.8,589.7 132.8,589.9 134.8,590.0 135.0,590.0 135.0,584.0" fill="#07320a"/>
<polygon points="135.0,584.0 135.0,590.0 137.0,590.5 139.0,591.0 140.4,591.4 140.4,584.0" fill="#7a2412"/>
<polygon points="140.4,584.0 140.4,591.4 142.4,591.9 144.4,592.4 146.4,592.9 146.7,592.9 146.7,584.0" fill="#07320a"/>
<polygon points="146.7,584.0 146.7,592.9 148.7,593.4 150.7,593.2 152.7,592.7 154.7,592.1 156.7,591.5 158.4,591.0 158.4,584.0" fill="#7a2412"/>
<polygon points="158.4,584.0 158.4,591.0 160.4,590.5 162.4,589.8 164.4,589.1 166.4,588.3 168.4,587.6 170.4,586.8 172.4,586.1 174.4,585.3 176.3,584.6 176.3,584.0" fill="#07320a"/>
<polygon points="176.3,584.0 176.3,584.6 178.3,583.4 180.3,582.2 182.3,581.0 184.3,579.8 186.3,579.2 188.3,579.1 190.3,579.0 192.3,578.9 194.3,578.8 194.3,584.0" fill="#7a2412"/>
<polygon points="194.3,584.0 194.3,578.8 196.3,578.5 198.3,578.1 200.3,577.8 202.3,577.5 204.3,577.1 206.3,577.8 208.3,578.9 210.3,580.1 212.3,581.3 214.3,582.5 216.3,583.6 218.3,584.8 219.5,585.5 219.5,584.0" fill="#07320a"/>
<polygon points="219.5,584.0 219.5,585.5 221.5,586.1 223.5,586.7 225.5,587.4 227.5,588.0 229.5,588.6 231.5,589.2 233.5,589.8 235.5,590.2 237.5,590.5 239.5,590.8 241.5,591.1 243.5,591.4 245.5,591.7 247.5,591.6 248.3,591.5 248.3,584.0" fill="#07320a"/>
<polygon points="248.3,584.0 248.3,591.5 250.3,591.2 252.3,590.8 254.3,590.5 256.3,590.2 257.3,590.0 257.3,584.0" fill="#7a2412"/>
<polygon points="257.3,584.0 257.3,590.0 259.3,589.9 261.3,589.7 262.7,589.6 262.7,584.0" fill="#07320a"/>
<polygon points="262.7,584.0 262.7,589.6 264.7,589.5 266.3,589.4 266.3,584.0" fill="#7a2412"/>
<polygon points="266.3,584.0 266.3,589.4 268.3,589.2 270.3,589.1 272.3,588.9 273.5,588.8 273.5,584.0" fill="#07320a"/>
<polygon points="273.5,584.0 273.5,588.8 275.5,588.7 277.5,588.5 279.5,588.4 281.5,588.3 282.5,588.2 282.5,584.0" fill="#7a2412"/>
<polygon points="282.5,584.0 282.5,588.2 284.5,588.0 286.5,587.9 288.5,587.6 290.5,587.1 292.5,586.5 294.5,586.0 296.5,585.4 298.5,584.8 300.5,584.3 302.5,583.7 304.5,583.2 306.5,582.5 308.5,581.7 310.5,580.9 311.2,580.6 311.2,584.0" fill="#07320a"/>
<polygon points="311.2,584.0 311.2,580.6 313.2,579.8 315.2,579.2 317.2,579.2 319.2,579.2 321.2,579.2 323.2,579.2 325.2,582.3 326.0,584.0 326.0,584.0" fill="#7a2412"/>
<rect x="111.0" y="584.0" width="4.0" height="4.3" fill="#e8381c"/>
<rect x="116.9" y="584.0" width="4.0" height="5.0" fill="#0d5a12"/>
<rect x="122.8" y="584.0" width="4.0" height="5.4" fill="#0d5a12"/>
<rect x="128.7" y="584.0" width="4.0" height="5.7" fill="#0d5a12"/>
<rect x="134.6" y="584.0" width="4.0" height="6.4" fill="#e8381c"/>
<rect x="140.5" y="584.0" width="4.0" height="7.9" fill="#0d5a12"/>
<rect x="146.4" y="584.0" width="4.0" height="9.4" fill="#e8381c"/>
<rect x="152.3" y="584.0" width="4.0" height="8.2" fill="#e8381c"/>
<rect x="158.2" y="584.0" width="4.0" height="6.5" fill="#0d5a12"/>
<rect x="164.1" y="584.0" width="4.0" height="4.5" fill="#0d5a12"/>
<rect x="170.0" y="584.0" width="4.0" height="2.2" fill="#0d5a12"/>
<rect x="175.9" y="583.6" width="4.0" height="0.4" fill="#e8381c"/>
<rect x="181.8" y="580.1" width="4.0" height="3.9" fill="#e8381c"/>
<rect x="187.7" y="579.0" width="4.0" height="5.0" fill="#e8381c"/>
<rect x="193.6" y="578.6" width="4.0" height="5.4" fill="#0d5a12"/>
<rect x="199.5" y="577.6" width="4.0" height="6.4" fill="#0d5a12"/>
<rect x="205.4" y="578.4" width="4.0" height="5.6" fill="#0d5a12"/>
<rect x="211.3" y="581.9" width="4.0" height="2.1" fill="#0d5a12"/>
<rect x="217.2" y="584.0" width="4.0" height="1.3" fill="#0d5a12"/>
<rect x="223.1" y="584.0" width="4.0" height="3.2" fill="#0d5a12"/>
<rect x="229.0" y="584.0" width="4.0" height="5.1" fill="#0d5a12"/>
<rect x="234.9" y="584.0" width="4.0" height="6.4" fill="#0d5a12"/>
<rect x="240.8" y="584.0" width="4.0" height="7.3" fill="#0d5a12"/>
<rect x="246.7" y="584.0" width="4.0" height="7.4" fill="#e8381c"/>
<rect x="252.6" y="584.0" width="4.0" height="6.4" fill="#e8381c"/>
<rect x="258.5" y="584.0" width="4.0" height="5.8" fill="#0d5a12"/>
<rect x="264.4" y="584.0" width="4.0" height="5.3" fill="#0d5a12"/>
<rect x="270.3" y="584.0" width="4.0" height="4.9" fill="#0d5a12"/>
<rect x="276.2" y="584.0" width="4.0" height="4.5" fill="#e8381c"/>
<rect x="282.1" y="584.0" width="4.0" height="4.1" fill="#0d5a12"/>
<rect x="288.0" y="584.0" width="4.0" height="3.2" fill="#0d5a12"/>
<rect x="293.9" y="584.0" width="4.0" height="1.6" fill="#0d5a12"/>
<rect x="299.8" y="583.9" width="4.0" height="0.1" fill="#0d5a12"/>
<rect x="305.7" y="582.0" width="4.0" height="2.0" fill="#0d5a12"/>
<rect x="311.6" y="579.7" width="4.0" height="4.3" fill="#e8381c"/>
<rect x="317.5" y="579.2" width="4.0" height="4.8" fill="#e8381c"/>
<rect x="323.4" y="582.7" width="4.0" height="1.3" fill="#e8381c"/>
<rect x="329.3" y="584.0" width="4.0" height="11.1" fill="#0d5a12"/>
<rect x="335.2" y="584.0" width="4.0" height="23.5" fill="#0d5a12"/>
<rect x="341.1" y="584.0" width="4.0" height="35.9" fill="#0d5a12"/>
<rect x="347.0" y="584.0" width="4.0" height="41.8" fill="#0d5a12"/>
<rect x="352.9" y="584.0" width="4.0" height="47.2" fill="#0d5a12"/>
<rect x="358.8" y="584.0" width="4.0" height="51.6" fill="#0d5a12"/>
<rect x="364.7" y="584.0" width="4.0" height="55.2" fill="#0d5a12"/>
<rect x="370.6" y="584.0" width="4.0" height="58.8" fill="#0d5a12"/>
<rect x="376.5" y="584.0" width="4.0" height="60.1" fill="#0d5a12"/>
<rect x="382.4" y="584.0" width="4.0" height="57.5" fill="#e8381c"/>
<rect x="388.3" y="584.0" width="4.0" height="54.8" fill="#e8381c"/>
<rect x="394.2" y="584.0" width="4.0" height="53.2" fill="#e8381c"/>
<rect x="400.1" y="584.0" width="4.0" height="51.5" fill="#e8381c"/>
<rect x="406.0" y="584.0" width="4.0" height="50.7" fill="#e8381c"/>
<rect x="411.9" y="584.0" width="4.0" height="49.9" fill="#e8381c"/>
<rect x="417.8" y="584.0" width="4.0" height="50.6" fill="#e8381c"/>
<rect x="423.7" y="584.0" width="4.0" height="52.3" fill="#0d5a12"/>
<rect x="429.6" y="584.0" width="4.0" height="53.7" fill="#0d5a12"/>
<rect x="435.5" y="584.0" width="4.0" height="53.0" fill="#e8381c"/>
<rect x="441.4" y="584.0" width="4.0" height="52.1" fill="#e8381c"/>
<rect x="447.3" y="584.0" width="4.0" height="50.4" fill="#e8381c"/>
<rect x="453.2" y="584.0" width="4.0" height="48.7" fill="#e8381c"/>
<rect x="459.1" y="584.0" width="4.0" height="54.2" fill="#0d5a12"/>
<rect x="465.0" y="584.0" width="4.0" height="59.6" fill="#0d5a12"/>
<rect x="470.9" y="584.0" width="4.0" height="61.8" fill="#0d5a12"/>
<rect x="476.8" y="584.0" width="4.0" height="64.0" fill="#0d5a12"/>
<rect x="482.7" y="584.0" width="4.0" height="66.2" fill="#0d5a12"/>
<rect x="488.6" y="584.0" width="4.0" height="68.0" fill="#0d5a12"/>
<rect x="494.5" y="584.0" width="4.0" height="69.9" fill="#0d5a12"/>
<rect x="500.4" y="584.0" width="4.0" height="71.2" fill="#0d5a12"/>
<rect x="506.3" y="584.0" width="4.0" height="71.2" fill="#0d5a12"/>
<rect x="512.2" y="584.0" width="4.0" height="70.2" fill="#e8381c"/>
<rect x="518.1" y="584.0" width="4.0" height="66.9" fill="#e8381c"/>
<rect x="524.0" y="584.0" width="4.0" height="64.3" fill="#e8381c"/>
<rect x="529.9" y="584.0" width="4.0" height="62.1" fill="#e8381c"/>
<rect x="535.8" y="584.0" width="4.0" height="59.8" fill="#e8381c"/>
<rect x="541.7" y="584.0" width="4.0" height="57.4" fill="#e8381c"/>
<rect x="547.6" y="584.0" width="4.0" height="53.8" fill="#e8381c"/>
<rect x="553.5" y="584.0" width="4.0" height="50.3" fill="#e8381c"/>
<rect x="559.4" y="584.0" width="4.0" height="46.7" fill="#e8381c"/>
<rect x="565.3" y="584.0" width="4.0" height="43.1" fill="#e8381c"/>
<rect x="571.2" y="584.0" width="4.0" height="39.0" fill="#e8381c"/>
<rect x="577.1" y="584.0" width="4.0" height="35.5" fill="#e8381c"/>
<rect x="583.0" y="584.0" width="4.0" height="34.9" fill="#0d5a12"/>
<rect x="588.9" y="584.0" width="4.0" height="36.1" fill="#e8381c"/>
<rect x="594.8" y="584.0" width="4.0" height="45.0" fill="#0d5a12"/>
<rect x="600.7" y="584.0" width="4.0" height="57.8" fill="#0d5a12"/>
<rect x="606.6" y="584.0" width="4.0" height="67.7" fill="#0d5a12"/>
<rect x="612.5" y="584.0" width="4.0" height="69.4" fill="#0d5a12"/>
<rect x="618.4" y="584.0" width="4.0" height="67.4" fill="#e8381c"/>
<rect x="624.3" y="584.0" width="4.0" height="69.9" fill="#0d5a12"/>
<rect x="630.2" y="584.0" width="4.0" height="73.0" fill="#0d5a12"/>
<rect x="636.1" y="584.0" width="4.0" height="76.5" fill="#0d5a12"/>
<rect x="642.0" y="584.0" width="4.0" height="80.0" fill="#0d5a12"/>
<rect x="647.9" y="584.0" width="4.0" height="83.4" fill="#0d5a12"/>
<rect x="653.8" y="584.0" width="4.0" height="83.8" fill="#0d5a12"/>
<rect x="659.7" y="584.0" width="4.0" height="82.7" fill="#e8381c"/>
<rect x="665.6" y="584.0" width="4.0" height="80.2" fill="#e8381c"/>
<rect x="671.5" y="584.0" width="4.0" height="77.4" fill="#e8381c"/>
<rect x="677.4" y="584.0" width="4.0" height="74.3" fill="#e8381c"/>
<rect x="683.3" y="584.0" width="4.0" height="70.9" fill="#e8381c"/>
<rect x="689.2" y="584.0" width="4.0" height="67.1" fill="#e8381c"/>
<rect x="695.1" y="584.0" width="4.0" height="63.4" fill="#e8381c"/>
<rect x="701.0" y="584.0" width="4.0" height="60.3" fill="#e8381c"/>
<rect x="706.9" y="584.0" width="4.0" height="58.0" fill="#e8381c"/>
<rect x="712.8" y="584.0" width="4.0" height="58.4" fill="#0d5a12"/>
<rect x="718.7" y="584.0" width="4.0" height="58.9" fill="#e8381c"/>
<rect x="724.6" y="584.0" width="4.0" height="59.7" fill="#e8381c"/>
<rect x="730.5" y="584.0" width="4.0" height="61.8" fill="#0d5a12"/>
<rect x="736.4" y="584.0" width="4.0" height="66.0" fill="#0d5a12"/>
<rect x="742.3" y="584.0" width="4.0" height="72.6" fill="#0d5a12"/>
<rect x="748.2" y="584.0" width="4.0" height="79.0" fill="#0d5a12"/>
<rect x="754.1" y="584.0" width="4.0" height="80.5" fill="#0d5a12"/>
<rect x="760.0" y="584.0" width="4.0" height="81.1" fill="#e8381c"/>
<rect x="765.9" y="584.0" width="4.0" height="80.7" fill="#0d5a12"/>
<rect x="771.8" y="584.0" width="4.0" height="80.3" fill="#e8381c"/>
<rect x="777.7" y="584.0" width="4.0" height="79.5" fill="#0d5a12"/>
<rect x="783.6" y="584.0" width="4.0" height="77.4" fill="#e8381c"/>
<rect x="789.5" y="584.0" width="4.0" height="75.4" fill="#e8381c"/>
<rect x="795.4" y="584.0" width="4.0" height="73.6" fill="#e8381c"/>
<rect x="801.3" y="584.0" width="4.0" height="70.6" fill="#e8381c"/>
<rect x="807.2" y="584.0" width="4.0" height="67.1" fill="#e8381c"/>
<rect x="813.1" y="584.0" width="4.0" height="65.3" fill="#0d5a12"/>
<rect x="819.0" y="584.0" width="4.0" height="63.5" fill="#e8381c"/>
<rect x="824.9" y="584.0" width="4.0" height="61.1" fill="#e8381c"/>
<rect x="830.8" y="584.0" width="4.0" height="58.6" fill="#e8381c"/>
<rect x="836.7" y="584.0" width="4.0" height="56.6" fill="#e8381c"/>
<rect x="842.6" y="584.0" width="4.0" height="54.7" fill="#e8381c"/>
<rect x="848.5" y="584.0" width="4.0" height="52.9" fill="#e8381c"/>
<rect x="854.4" y="584.0" width="4.0" height="51.4" fill="#e8381c"/>
<rect x="860.3" y="584.0" width="4.0" height="50.2" fill="#e8381c"/>
<rect x="866.2" y="584.0" width="4.0" height="52.8" fill="#0d5a12"/>
<rect x="872.1" y="584.0" width="4.0" height="59.0" fill="#0d5a12"/>
<rect x="878.0" y="584.0" width="4.0" height="65.5" fill="#0d5a12"/>
<rect x="883.9" y="584.0" width="4.0" height="68.9" fill="#0d5a12"/>
<rect x="889.8" y="584.0" width="4.0" height="71.1" fill="#0d5a12"/>
<rect x="895.7" y="584.0" width="4.0" height="75.4" fill="#0d5a12"/>
<rect x="901.6" y="584.0" width="4.0" height="79.8" fill="#0d5a12"/>
<rect x="907.5" y="584.0" width="4.0" height="82.9" fill="#0d5a12"/>
<rect x="913.4" y="584.0" width="4.0" height="85.9" fill="#0d5a12"/>
<rect x="919.3" y="584.0" width="4.0" height="87.3" fill="#0d5a12"/>
<rect x="925.2" y="584.0" width="4.0" height="88.3" fill="#0d5a12"/>
<rect x="931.1" y="584.0" width="4.0" height="89.3" fill="#0d5a12"/>
<rect x="937.0" y="584.0" width="4.0" height="83.5" fill="#e8381c"/>
<rect x="942.9" y="584.0" width="4.0" height="81.7" fill="#e8381c"/>
<rect x="948.8" y="584.0" width="4.0" height="78.8" fill="#e8381c"/>
<rect x="954.7" y="584.0" width="4.0" height="73.5" fill="#e8381c"/>
<rect x="960.6" y="584.0" width="4.0" height="68.2" fill="#e8381c"/>
<rect x="966.5" y="584.0" width="4.0" height="63.4" fill="#e8381c"/>
<rect x="972.4" y="584.0" width="4.0" height="58.6" fill="#e8381c"/>
<rect x="978.3" y="584.0" width="4.0" height="54.7" fill="#e8381c"/>
<rect x="984.2" y="584.0" width="4.0" height="51.8" fill="#e8381c"/>
<rect x="990.1" y="584.0" width="4.0" height="48.8" fill="#e8381c"/>
<rect x="996.0" y="584.0" width="4.0" height="42.8" fill="#e8381c"/>
<rect x="1001.9" y="584.0" width="4.0" height="36.1" fill="#e8381c"/>
<rect x="1007.8" y="584.0" width="4.0" height="30.6" fill="#e8381c"/>
<rect x="1013.7" y="584.0" width="4.0" height="26.0" fill="#e8381c"/>
<rect x="1019.6" y="584.0" width="4.0" height="23.5" fill="#e8381c"/>
<rect x="1025.5" y="584.0" width="4.0" height="21.6" fill="#e8381c"/>
<rect x="1031.4" y="584.0" width="4.0" height="22.1" fill="#e8381c"/>
<rect x="1037.3" y="584.0" width="4.0" height="22.7" fill="#0d5a12"/>
<rect x="1043.2" y="584.0" width="4.0" height="24.7" fill="#e8381c"/>
<rect x="1049.1" y="584.0" width="4.0" height="26.5" fill="#0d5a12"/>
<rect x="1055.0" y="584.0" width="4.0" height="27.8" fill="#0d5a12"/>
<rect x="1060.9" y="584.0" width="4.0" height="28.3" fill="#0d5a12"/>
<rect x="1066.8" y="584.0" width="4.0" height="28.3" fill="#e8381c"/>
<rect x="1072.7" y="584.0" width="4.0" height="27.3" fill="#e8381c"/>
<rect x="1078.6" y="584.0" width="4.0" height="26.3" fill="#e8381c"/>
<rect x="1084.5" y="584.0" width="4.0" height="25.1" fill="#e8381c"/>
<rect x="1090.4" y="584.0" width="4.0" height="23.9" fill="#e8381c"/>
<rect x="1096.3" y="584.0" width="4.0" height="22.8" fill="#e8381c"/>
<rect x="1102.2" y="584.0" width="4.0" height="21.5" fill="#e8381c"/>
<rect x="1108.1" y="584.0" width="4.0" height="20.3" fill="#e8381c"/>
<rect x="1114.0" y="584.0" width="4.0" height="19.1" fill="#e8381c"/>
<rect x="1119.9" y="584.0" width="4.0" height="17.8" fill="#e8381c"/>
<rect x="1125.8" y="584.0" width="0.2" height="17.0" fill="#0d5a12"/>
<path d="M111.0,588.0 C112.3,588.2 114.8,588.7 118.8,589.0 C122.8,589.3 129.9,589.2 135.0,590.0 C140.1,590.8 144.9,593.6 149.4,593.6 C153.9,593.6 157.5,591.5 162.0,590.0 C166.5,588.5 172.4,586.4 176.3,584.6 C180.2,582.8 182.3,580.2 185.3,579.2 C188.3,578.2 191.0,579.2 194.3,578.8 C197.6,578.4 200.8,575.9 205.0,577.0 C209.2,578.1 214.7,583.3 219.5,585.5 C224.3,587.7 229.5,589.0 234.0,590.0 C238.5,591.0 242.6,591.8 246.5,591.8 C250.4,591.8 250.4,590.7 257.3,590.0 C264.2,589.3 279.8,589.0 287.9,587.8 C296.0,586.6 301.3,584.2 305.8,582.8 C310.3,581.4 311.8,579.8 314.8,579.2 C317.8,578.6 321.9,578.4 323.8,579.2 C325.7,580.0 324.3,580.4 326.0,584.0 C327.7,587.6 331.1,594.7 334.0,600.8 C336.9,606.9 339.6,615.2 343.5,620.7 C347.4,626.2 352.0,629.6 357.5,633.6 C363.0,637.6 372.4,643.4 376.3,645.0 C380.2,646.6 378.6,644.0 381.0,643.0 C383.4,642.0 386.9,640.0 390.4,638.8 C393.9,637.5 397.7,636.4 402.0,635.5 C406.3,634.6 412.7,633.6 416.2,633.6 C419.7,633.6 420.8,634.8 423.2,635.5 C425.6,636.2 427.2,637.7 430.3,637.9 C433.4,638.1 437.7,637.4 442.0,636.5 C446.3,635.6 452.1,631.4 456.0,632.5 C459.9,633.6 460.7,640.1 465.4,643.0 C470.1,645.9 478.3,648.0 484.2,650.0 C490.1,652.0 495.9,654.3 500.6,655.2 C505.3,656.1 508.9,656.1 512.4,655.2 C515.9,654.3 516.6,652.2 521.7,650.0 C526.8,647.8 535.4,645.6 542.8,641.9 C550.2,638.2 560.4,631.5 566.3,627.8 C572.2,624.1 574.1,621.2 578.0,619.6 C581.9,618.0 586.7,616.8 589.8,618.4 C592.9,620.0 593.9,623.5 596.8,629.0 C599.7,634.5 604.1,647.1 607.0,651.2 C609.9,655.3 611.7,653.6 614.0,653.6 C616.3,653.6 618.2,650.8 621.0,651.2 C623.8,651.6 627.0,654.0 630.5,656.0 C634.0,658.0 638.7,660.9 642.2,663.0 C645.7,665.1 648.5,667.7 651.6,668.4 C654.7,669.1 657.9,667.9 661.0,667.0 C664.1,666.1 666.9,664.7 670.4,663.0 C673.9,661.3 677.3,659.8 682.0,657.0 C686.7,654.2 694.2,649.0 698.5,646.5 C702.8,644.0 704.1,642.5 708.0,641.9 C711.9,641.3 718.3,642.6 722.0,643.0 C725.7,643.4 727.5,643.0 730.2,644.2 C732.9,645.4 735.1,646.9 738.4,650.0 C741.7,653.1 746.5,660.5 750.0,663.0 C753.5,665.5 754.8,665.1 759.5,665.3 C764.2,665.5 773.6,664.8 778.3,664.0 C783.0,663.2 784.2,661.8 787.7,660.6 C791.2,659.4 795.9,658.6 799.4,657.0 C802.9,655.4 805.3,652.8 808.8,651.2 C812.3,649.7 816.2,649.2 820.5,647.7 C824.8,646.2 829.1,643.9 834.6,641.9 C840.1,639.9 848.2,637.4 853.3,636.0 C858.4,634.6 861.9,632.8 865.0,633.6 C868.1,634.4 869.2,637.8 872.0,640.7 C874.8,643.6 878.1,648.8 881.5,651.2 C884.9,653.6 888.4,653.1 892.2,655.3 C896.0,657.5 900.3,661.9 904.4,664.4 C908.5,666.9 911.5,669.0 916.6,670.5 C921.7,672.0 931.2,674.1 934.9,673.6 C938.6,673.1 936.6,669.0 939.0,667.5 C941.4,666.0 945.3,666.8 949.0,664.4 C952.7,662.0 956.5,657.4 961.3,653.3 C966.1,649.2 972.2,643.5 977.6,640.0 C983.0,636.5 989.7,635.0 993.8,632.0 C997.9,629.0 998.6,625.4 1002.0,621.8 C1005.4,618.2 1010.1,613.3 1014.2,610.6 C1018.3,607.9 1022.3,606.2 1026.4,605.5 C1030.5,604.8 1035.5,606.0 1038.6,606.5 C1041.6,607.0 1042.0,607.6 1044.7,608.5 C1047.4,609.4 1051.1,610.9 1054.8,611.6 C1058.5,612.3 1062.9,612.8 1067.0,612.6 C1071.1,612.4 1073.8,611.6 1079.2,610.6 C1084.6,609.6 1092.1,608.0 1099.6,606.5 C1107.1,605.0 1119.6,602.3 1124.0,601.4 C1128.4,600.5 1125.7,601.1 1126.0,601.0" fill="none" stroke="#8a7838" stroke-width="1"/>
<path d="M111.6,588.2 C115.5,588.3 128.1,588.7 135.0,589.0 C141.9,589.3 147.0,590.3 153.0,590.0 C159.0,589.7 165.6,588.3 171.0,587.3 C176.4,586.2 180.2,585.2 185.3,583.7 C190.4,582.2 196.1,579.8 201.5,578.3 C206.9,576.8 212.6,575.0 218.0,575.0 C223.4,575.0 228.3,576.5 234.0,578.3 C239.7,580.0 246.9,583.7 252.0,585.5 C257.1,587.3 258.5,588.2 264.5,589.0 C270.5,589.8 281.0,590.3 287.9,590.0 C294.8,589.7 299.8,588.2 305.8,587.3 C311.8,586.4 316.8,582.9 323.8,584.6 C330.8,586.3 340.8,591.7 348.0,597.3 C355.2,602.9 361.5,612.7 367.0,618.4 C372.5,624.1 376.3,628.0 381.0,631.3 C385.7,634.6 387.6,637.1 395.0,638.3 C402.4,639.5 415.4,638.8 425.6,638.3 C435.8,637.8 446.2,634.8 456.0,635.5 C465.8,636.2 474.8,640.0 484.2,642.6 C493.6,645.2 504.6,649.6 512.4,651.2 C520.2,652.8 524.0,653.4 531.0,652.4 C538.0,651.4 546.8,648.7 554.6,645.4 C562.4,642.1 571.0,635.8 578.0,632.5 C585.0,629.2 589.2,625.0 596.8,625.4 C604.4,625.8 615.1,629.9 623.5,634.8 C631.9,639.7 640.4,650.4 647.0,654.8 C653.6,659.2 656.3,659.9 663.3,661.3 C670.3,662.7 680.8,664.1 689.0,663.0 C697.2,661.9 705.1,657.8 712.6,654.8 C720.1,651.8 728.2,646.5 733.7,644.9 C739.2,643.3 740.3,644.2 745.4,645.4 C750.5,646.6 757.2,649.5 764.2,652.0 C771.2,654.5 780.7,659.0 787.7,660.6 C794.7,662.2 799.4,662.6 806.4,661.8 C813.4,661.0 822.1,658.4 829.9,655.9 C837.7,653.4 846.3,649.4 853.3,646.5 C860.3,643.6 864.2,638.2 872.0,638.3 C879.8,638.4 892.2,643.5 900.3,647.2 C908.4,650.9 913.9,656.9 920.7,660.4 C927.5,663.9 935.6,667.0 941.0,668.5 C946.4,670.0 948.1,670.5 953.2,669.5 C958.3,668.5 964.7,665.9 971.5,662.4 C978.3,658.9 986.0,654.0 993.8,648.2 C1001.6,642.5 1010.1,633.8 1018.2,627.9 C1026.3,622.0 1035.1,615.8 1042.6,612.6 C1050.1,609.4 1056.2,608.8 1063.0,608.5 C1069.8,608.2 1076.5,610.6 1083.3,610.6 C1090.1,610.6 1096.5,609.4 1103.6,608.5 C1110.7,607.6 1122.3,605.6 1126.0,605.0" fill="none" stroke="#3aaccc" stroke-width="2"/>
<line x1="111" y1="584" x2="1127" y2="584" stroke="#d2ccc6" stroke-width="1.2"/>
<rect x="111" y="677.6" width="1049" height="1.3" fill="#0c0c0c"/><rect x="111" y="678.9" width="1049" height="1.9" fill="#6c7070"/><rect x="111" y="680.8" width="1049" height="1" fill="#263238"/>
<g font-family="Liberation Sans" font-size="7" fill="#d4d4d4">
<line x1="1127" y1="66.0" x2="1129" y2="66.0" stroke="#999" stroke-width="1"/>
<text x="1131" y="68.6">1.30810</text>
<line x1="1127" y1="90.5" x2="1129" y2="90.5" stroke="#999" stroke-width="1"/>
<text x="1131" y="93.1">1.30620</text>
<line x1="1127" y1="115.0" x2="1129" y2="115.0" stroke="#999" stroke-width="1"/>
<text x="1131" y="117.6">1.30435</text>
<line x1="1127" y1="139.5" x2="1129" y2="139.5" stroke="#999" stroke-width="1"/>
<text x="1131" y="142.1">1.30245</text>
<line x1="1127" y1="164.0" x2="1129" y2="164.0" stroke="#999" stroke-width="1"/>
<text x="1131" y="166.6">1.30060</text>
<line x1="1127" y1="188.5" x2="1129" y2="188.5" stroke="#999" stroke-width="1"/>
<text x="1131" y="191.1">1.29870</text>
<line x1="1127" y1="213.0" x2="1129" y2="213.0" stroke="#999" stroke-width="1"/>
<text x="1131" y="215.6">1.29680</text>
<line x1="1127" y1="237.5" x2="1129" y2="237.5" stroke="#999" stroke-width="1"/>
<text x="1131" y="240.1">1.29495</text>
<line x1="1127" y1="262.0" x2="1129" y2="262.0" stroke="#999" stroke-width="1"/>
<text x="1131" y="264.6">1.29305</text>
<line x1="1127" y1="286.5" x2="1129" y2="286.5" stroke="#999" stroke-width="1"/>
<text x="1131" y="289.1">1.29120</text>
<line x1="1127" y1="311.0" x2="1129" y2="311.0" stroke="#999" stroke-width="1"/>
<text x="1131" y="313.6">1.28930</text>
<line x1="1127" y1="335.5" x2="1129" y2="335.5" stroke="#999" stroke-width="1"/>
<text x="1131" y="338.1">1.28745</text>
<line x1="1127" y1="360.0" x2="1129" y2="360.0" stroke="#999" stroke-width="1"/>
<text x="1131" y="362.6">1.28555</text>
<line x1="1127" y1="384.5" x2="1129" y2="384.5" stroke="#999" stroke-width="1"/>
<text x="1131" y="387.1">1.28370</text>
<line x1="1127" y1="409.0" x2="1129" y2="409.0" stroke="#999" stroke-width="1"/>
<text x="1131" y="411.6">1.28180</text>
<line x1="1127" y1="433.5" x2="1129" y2="433.5" stroke="#999" stroke-width="1"/>
<text x="1131" y="436.1">1.27995</text>
<line x1="1127" y1="458.0" x2="1129" y2="458.0" stroke="#999" stroke-width="1"/>
<text x="1131" y="460.6">1.27805</text>
<line x1="1127" y1="482.5" x2="1129" y2="482.5" stroke="#999" stroke-width="1"/>
<text x="1131" y="485.1">1.27615</text>
<line x1="1127" y1="507.0" x2="1129" y2="507.0" stroke="#999" stroke-width="1"/>
<text x="1131" y="509.6">1.27430</text>
<line x1="1127" y1="531.5" x2="1129" y2="531.5" stroke="#999" stroke-width="1"/>
<text x="1131" y="534.1">1.27240</text>
<line x1="1127" y1="556.0" x2="1129" y2="556.0" stroke="#999" stroke-width="1"/>
<text x="1131" y="558.6">1.27055</text>
<text x="1129" y="568.5">0.000585</text>
<rect x="1127.5" y="580" width="5" height="8" fill="#e0e0e0"/><text x="1133" y="587">.00</text>
</g>
</svg>
<div class="a dlg" style="left:208.6px;top:107.3px;width:311.6px;height:253px;background:linear-gradient(#b5c5d4 0%,#c4d3e0 4%,#cfdeeb 8.3%,#dfe8f1 8.4%,#d8e4ef 100%);border-color:#7d8fa1">
<div class="a" style="left:0;top:0;width:100%;height:1px;background:#a9b7c4"></div>
<div class="a" style="left:6.9px;top:20.9px;width:298.5px;height:225.5px;background:#f0f0f0;border:1px solid #c5d3e0;border-bottom-color:#e6eef6"></div>
</div>
<svg class="a" style="left:215px;top:114px" width="14" height="13" viewBox="0 0 14 13"><path d="M1,3 h6 M1,6 h5 M1,9 h6" stroke="#8b8b70" stroke-width="1"/><circle cx="8.5" cy="6.8" r="4.8" fill="#f2c12e" stroke="#d9a520" stroke-width="0.8"/><path d="M9,4 l-1.3,5" stroke="#6a4a00" stroke-width="1"/></svg>
<div class="a" style="left:230.2px;top:114.6px;font-size:9px;color:#2a3c50;white-space:nowrap;-webkit-text-stroke:0.15px #2a3c50">技术指标 GBPUSD,H1</div>
<div class="a" style="left:466.3px;top:114px;width:22px;height:12.8px;border:1px solid #8ea2b6;border-radius:3px;background:linear-gradient(#e3ecf5,#cddcea);font-size:9px;line-height:11px;text-align:center;color:#4a5a6a;font-weight:bold">?</div>
<div class="a" style="left:490.5px;top:114px;width:22px;height:12.8px;border:1px solid #8ea2b6;border-radius:3px;background:linear-gradient(#e3ecf5,#cddcea);font-size:11px;line-height:11px;text-align:center;color:#4a5a6a">×</div>
<div class="a" style="left:219.8px;top:135px;width:213.2px;height:211.7px;background:#fcfcfc;border:1px solid #9a9a9a;border-right-color:#b8b8b8;border-bottom-color:#c6c6c6"></div>
<svg class="a" style="left:0;top:0" width="600" height="400" viewBox="0 0 600 400"><g stroke="#a0a0a0" stroke-width="1" stroke-dasharray="1 1" fill="none"><path d="M230.5,148 V236"/><path d="M246.5,150 V224 M246.5,224 H255 M246.5,157.5 H255 M246.5,170.5 H255 M246.5,184 H255 M246.5,197 H255 M246.5,210.5 H255"/><path d="M246.5,244 V251 H255"/><path d="M234,143.5 H239 M234,237.5 H239"/></g></svg>
<div class="a" style="left:226.8px;top:140px;width:8px;height:8px;border:1px solid #a8a8a8;border-radius:1px;background:linear-gradient(#fff,#e4e4e4)"><div class="a" style="left:1.5px;top:2.5px;width:3px;height:1px;background:#555"></div></div><div class="a" style="left:226.8px;top:233.5px;width:8px;height:8px;border:1px solid #a8a8a8;border-radius:1px;background:linear-gradient(#fff,#e4e4e4)"><div class="a" style="left:1.5px;top:2.5px;width:3px;height:1px;background:#555"></div></div>
<svg class="a" style="left:240px;top:137.5px" width="13" height="12" viewBox="0 0 13 12"><rect x="0.5" y="0.5" width="12" height="11" fill="#eaf2fb" stroke="#2a5aa0"/><rect x="0.5" y="0.5" width="12" height="2.5" fill="#1e4d96"/><path d="M2.5,9 l2,-4 l2,3 l2,-3 l2,3" stroke="#4a7ac0" stroke-width="0.9" fill="none"/></svg><svg class="a" style="left:240px;top:231.3px" width="13" height="12" viewBox="0 0 13 12"><rect x="0.5" y="0.5" width="12" height="11" fill="#eaf2fb" stroke="#2a5aa0"/><rect x="0.5" y="0.5" width="12" height="2.5" fill="#1e4d96"/><path d="M2.5,9 l2,-4 l2,3 l2,-3 l2,3" stroke="#4a7ac0" stroke-width="0.9" fill="none"/></svg>
<div class="a row" style="left:256.3px;top:138px;font-size:9.2px;color:#151515">主图表</div>
<div class="a row" style="left:256.3px;top:231.8px;font-size:9.2px;color:#151515">技术指标窗口 1</div>
<svg class="a" style="left:256px;top:151.2px" width="12" height="12" viewBox="0 0 12 12"><rect x="0.5" y="0.5" width="10.5" height="10.5" rx="1.5" fill="#f3cd45" stroke="#c39a2a"/><path d="M6.5,2.5 q-1.5,0 -1.8,2 l-0.9,4.5 M3.8,5 h2.8" stroke="#7a5a10" stroke-width="1.1" fill="none"/></svg>
<div class="a row" style="left:271.4px;top:151.8px;font-size:8px">Moving Average</div>
<svg class="a" style="left:256px;top:164.5px" width="12" height="12" viewBox="0 0 12 12"><rect x="0.5" y="0.5" width="10.5" height="10.5" rx="1.5" fill="#f3cd45" stroke="#c39a2a"/><path d="M6.5,2.5 q-1.5,0 -1.8,2 l-0.9,4.5 M3.8,5 h2.8" stroke="#7a5a10" stroke-width="1.1" fill="none"/><circle cx="9" cy="9" r="2.5" fill="#f0c040" stroke="#8a6a10" stroke-width="0.8"/></svg>
<div class="a row" style="left:271.4px;top:165.1px;font-size:8px">GP_Clock</div>
<svg class="a" style="left:256px;top:177.89999999999998px" width="12" height="12" viewBox="0 0 12 12"><rect x="0.5" y="0.5" width="10.5" height="10.5" rx="1.5" fill="#f3cd45" stroke="#c39a2a"/><path d="M6.5,2.5 q-1.5,0 -1.8,2 l-0.9,4.5 M3.8,5 h2.8" stroke="#7a5a10" stroke-width="1.1" fill="none"/><circle cx="9" cy="9" r="2.5" fill="#f0c040" stroke="#8a6a10" stroke-width="0.8"/></svg>
<div class="a row" style="left:271.4px;top:178.5px;font-size:8px">hi</div>
<svg class="a" style="left:256px;top:191.29999999999998px" width="12" height="12" viewBox="0 0 12 12"><rect x="0.5" y="0.5" width="10.5" height="10.5" rx="1.5" fill="#f3cd45" stroke="#c39a2a"/><path d="M6.5,2.5 q-1.5,0 -1.8,2 l-0.9,4.5 M3.8,5 h2.8" stroke="#7a5a10" stroke-width="1.1" fill="none"/><circle cx="9" cy="9" r="2.5" fill="#f0c040" stroke="#8a6a10" stroke-width="0.8"/></svg>
<div class="a row" style="left:271.4px;top:191.9px;font-size:8.8px">点差报数器</div>
<svg class="a" style="left:256px;top:204.7px" width="12" height="12" viewBox="0 0 12 12"><rect x="0.5" y="0.5" width="10.5" height="10.5" rx="1.5" fill="#f3cd45" stroke="#c39a2a"/><path d="M6.5,2.5 q-1.5,0 -1.8,2 l-0.9,4.5 M3.8,5 h2.8" stroke="#7a5a10" stroke-width="1.1" fill="none"/></svg>
<div class="a row" style="left:271.4px;top:205.3px;font-size:8px">Bollinger Bands</div>
<svg class="a" style="left:256px;top:218.1px" width="12" height="12" viewBox="0 0 12 12"><rect x="0.5" y="0.5" width="10.5" height="10.5" rx="1.5" fill="#f3cd45" stroke="#c39a2a"/><path d="M6.5,2.5 q-1.5,0 -1.8,2 l-0.9,4.5 M3.8,5 h2.8" stroke="#7a5a10" stroke-width="1.1" fill="none"/><circle cx="9" cy="9" r="2.5" fill="#f0c040" stroke="#8a6a10" stroke-width="0.8"/></svg>
<div class="a row" style="left:271.4px;top:218.7px;font-size:8px">ZigZag</div>
<svg class="a" style="left:256px;top:244.79999999999998px" width="12" height="12" viewBox="0 0 12 12"><rect x="0.5" y="0.5" width="10.5" height="10.5" rx="1.5" fill="#f3cd45" stroke="#c39a2a"/><path d="M6.5,2.5 q-1.5,0 -1.8,2 l-0.9,4.5 M3.8,5 h2.8" stroke="#7a5a10" stroke-width="1.1" fill="none"/><circle cx="9" cy="9" r="2.5" fill="#f0c040" stroke="#8a6a10" stroke-width="0.8"/></svg>
<div class="a row" style="left:271.4px;top:245.4px;font-size:7.8px">MACD two lines change color</div>
<div class="a btn" style="left:440px;top:136px;width:69.3px;height:15.6px">编辑(E)</div>
<div class="a btn" style="left:440px;top:157px;width:69.3px;height:15.0px">删除(D)</div>
<div class="a btn" style="left:440px;top:331.3px;width:69.3px;height:14.7px">关闭 (C)</div>
<div class="a" style="left:111px;top:289.3px;width:247.8px;height:288.4px;border:1px solid #25364a;border-left:0;border-radius:0 6px 0 0;overflow:hidden;background:linear-gradient(#7ca4c9 0%,#8fb3d4 3.5%,#a9c7e0 7.3%,#bcd3e8 7.4%,#c0d6ea 100%)">
<div class="a" style="left:0;top:0;width:100%;height:1px;background:#9fb3c6"></div>
<div class="a" style="left:0;top:21px;width:241px;height:262.5px;background:#f0f0f0;border-right:1px solid #e3ecf4"></div>
</div>
<div class="a" style="left:304.3px;top:296.6px;width:22px;height:12px;border:1px solid #6d86a0;border-radius:3px;background:linear-gradient(#c5d8ea,#a9c3dc 50%,#9ab8d6);font-size:9px;line-height:10px;text-align:center;color:#3a4e62;font-weight:bold">?</div>
<div class="a" style="left:328.2px;top:296.6px;width:23.5px;height:12px;border:1px solid #4a2a20;border-radius:3px;background:linear-gradient(#e9a486,#d5714c 50%,#c4542c);font-size:11px;line-height:10px;text-align:center;color:#fff;font-weight:bold">×</div>
<div class="a" style="left:111px;top:331px;width:237.5px;height:213px;background:#fbfbfb;border:1px solid #a0a0a0;border-left:0"></div>
<div class="a" style="left:111px;top:338.5px;width:230px;height:197.5px;background:#fbfcfb;border:1px solid #8a8a8a;border-left:0;border-right-color:#a8a8a8"></div>
<div class="a" style="left:111px;top:339.5px;width:229px;height:17px;background:linear-gradient(#ffffff,#f4f5f6 60%,#ecedef);border-bottom:1px solid #d5d5d5"></div>
<div class="a" style="left:192px;top:340px;width:1px;height:16px;background:#e0e0e0"></div>
<div class="a" style="left:197.5px;top:342.5px;font-size:9.3px;color:#1a1a1a">风格</div>
<div class="a" style="left:191.5px;top:357.5px;width:149px;height:14.3px;background:#1f7de0"></div>
<div class="a" style="left:196px;top:359.5px;font-size:8px;color:#cfe6ff">0.</div>
<div class="a" style="left:203px;top:364px;width:132px;height:1px;background:#6fb4f5"></div>
<div class="a" style="left:111px;top:357.2px;width:80.5px;height:15.3px;background:#fcfdfe;border-top:1px solid #8fa5bc;border-bottom:1px solid #b9c7d6"></div>
<div class="a" style="left:111px;top:363.6px;width:60.6px;height:1.5px;background:#3a3232"></div>
<div class="a" style="left:180.2px;top:357.8px;width:10.6px;height:14.2px;border:1px solid #6b8fb5;background:linear-gradient(#e6f0fa,#b8d0ea)"><svg class="a" style="left:1.5px;top:4.5px" width="7" height="5"><path d="M0.5,0.5 h6 l-3,3.5z" fill="#111"/></svg></div>
<div class="a" style="left:111px;top:372.6px;width:80.5px;height:56.2px;background:#fdfdfd;border:1px solid #c8c8c8;border-left:0"></div>
<div class="a" style="left:111px;top:373.1px;width:79.5px;height:11.3px;background:#1f7de0"></div>
<div class="a" style="left:112px;top:378.4px;width:73.5px;height:1.6px;background:#5fb0f6"></div>
<div class="a" style="left:111px;top:389.3px;width:75.5px;height:1.6px;background:#0c0c0c;border-radius:0 2px 2px 0"></div>
<div class="a" style="left:111px;top:400.2px;width:75.5px;height:2.6px;background:#0c0c0c;border-radius:0 2px 2px 0"></div>
<div class="a" style="left:111px;top:411.1px;width:75.5px;height:3.2px;background:#0c0c0c;border-radius:0 2px 2px 0"></div>
<div class="a" style="left:111px;top:422px;width:75.5px;height:3.8px;background:#0c0c0c;border-radius:0 2px 2px 0"></div>
<div class="a" style="left:134.4px;top:367.5px;width:20.6px;height:20.6px;border-radius:50%;background:#2b7840;opacity:0.93"></div>
<svg class="a" style="left:144px;top:377.5px" width="12" height="14" viewBox="0 0 12 14"><path d="M0.7,0.7 V10.5 L3,8.5 L4.8,12.4 L6.6,11.6 L4.9,7.8 H8z" fill="#fff" stroke="#111" stroke-width="0.9"/></svg>
<div class="a btn" style="left:171.4px;top:551.5px;width:54.5px;height:13.5px;border-color:#3c7fb1;background:linear-gradient(#eaf6fd,#d9f0fc 45%,#bee6fd 55%,#a7d9f5);box-shadow:inset 0 0 0 1px #48d0ff;line-height:11.5px">确定</div>
<div class="a btn" style="left:231.8px;top:551.5px;width:54px;height:13.5px;line-height:11.5px">取消</div>
<div class="a btn" style="left:291.7px;top:551.5px;width:55px;height:13.5px;line-height:11.5px">重设</div>
<div id="taskbar" class="a"></div>
<svg class="a" style="left:0;top:681px" width="1279" height="36" viewBox="0 681 1279 36">
<defs><radialGradient id="orb" cx="0.5" cy="0.4" r="0.6"><stop offset="0" stop-color="#e8f4ff"/><stop offset="0.5" stop-color="#6fb0e0"/><stop offset="1" stop-color="#1f5a90"/></radialGradient><radialGradient id="ieg" cx="0.45" cy="0.45" r="0.6"><stop offset="0" stop-color="#bff0ff"/><stop offset="1" stop-color="#1f86d8"/></radialGradient><radialGradient id="org" cx="0.45" cy="0.4" r="0.6"><stop offset="0" stop-color="#ffb060"/><stop offset="0.7" stop-color="#ea7a20"/><stop offset="1" stop-color="#c85a10"/></radialGradient><linearGradient id="btn" x1="0" y1="0" x2="0" y2="1"><stop offset="0" stop-color="#d9e6f2"/><stop offset="0.5" stop-color="#c3d6ea"/><stop offset="1" stop-color="#b6cce3"/></linearGradient></defs>
<rect x="0" y="681" width="1279" height="1" fill="#262a30"/><rect x="0" y="682" width="1279" height="1" fill="#e6eef6"/>
<rect x="113.8" y="683.5" width="50.2" height="34" rx="2.5" fill="url(#btn)" stroke="#8199b3" stroke-width="1"/>
<rect x="114.8" y="684.5" width="48.2" height="2" fill="#eef5fb" opacity="0.7"/>
<rect x="169" y="683.5" width="60.8" height="34" rx="2.5" fill="url(#btn)" stroke="#8199b3" stroke-width="1"/>
<rect x="170" y="684.5" width="58.8" height="2" fill="#eef5fb" opacity="0.7"/>
<rect x="230.6" y="683.5" width="46.8" height="34" rx="2.5" fill="url(#btn)" stroke="#8199b3" stroke-width="1"/>
<rect x="231.6" y="684.5" width="44.8" height="2" fill="#eef5fb" opacity="0.7"/>
<rect x="288.5" y="683.5" width="54.3" height="34" rx="2.5" fill="url(#btn)" stroke="#8199b3" stroke-width="1"/>
<rect x="289.5" y="684.5" width="52.3" height="2" fill="#eef5fb" opacity="0.7"/>
<rect x="279" y="683" width="1" height="34" fill="#7b90a8"/><rect x="283" y="683" width="1" height="34" fill="#7b90a8"/>
<circle cx="25" cy="699.5" r="16" fill="#d8e2ea" opacity="0.55"/><circle cx="25" cy="699.5" r="16" fill="none" stroke="#4a5a6a" stroke-width="0.8" opacity="0.6"/>
<g opacity="0.92"><path d="M12,693 q6,-7 12,-3 l-1,9 q-6,-4 -12,1z" fill="#f07a30"/><path d="M25,690 q6,-4 13,1 l-2,9 q-6,-5 -12,-1z" fill="#6cc23a"/><path d="M10.5,702 q6,-6 12,-2 l-1.5,10 q-6,-4 -11,0z" fill="#28a8e8"/><path d="M23.5,700 q6,-4 12,1 l-2,9 q-6,-5 -11.5,-1z" fill="#f2d23a"/></g>
<path d="M15,707 l0,11 l3,-3 l3,3z" fill="#fff" stroke="#111" stroke-width="0.9"/>
<rect x="71" y="690" width="19" height="21" fill="#b6def2" stroke="#5aaedc" stroke-width="1"/><rect x="91" y="691" width="2" height="19" fill="#5aaedc"/><rect x="93.5" y="692" width="1.5" height="17" fill="#7cc0e8"/><circle cx="80.5" cy="700" r="7.5" fill="#ee8a24"/><path d="M78,695.5 l7,4.5 l-7,4.5z" fill="#fff"/>
<path d="M126,688 h8 l2,2 h14 v19 h-24z" fill="#e8cc6a"/><rect x="126" y="694" width="24" height="16" fill="#f5e08e"/><rect x="131" y="702" width="16" height="9" rx="1.5" fill="#7fd0f0" stroke="#3d9ad0" stroke-width="1"/><rect x="134" y="706" width="10" height="6" fill="#f5e08e"/>
<path d="M209.5,705 A10.5,10 0 1 1 210,697.5" fill="none" stroke="#2a90dc" stroke-width="5"/>
<path d="M209.5,705 A10.5,10 0 1 1 210,697.5" fill="none" stroke="#8fdcff" stroke-width="1.6" opacity="0.7"/>
<rect x="190" y="698" width="21" height="4" fill="#2a90dc"/>
<ellipse cx="199" cy="699" rx="16" ry="6.5" transform="rotate(-40 199 699)" fill="none" stroke="#e6b845" stroke-width="2.4" stroke-dasharray="66 36" stroke-dashoffset="6"/>
<ellipse cx="249" cy="695.5" rx="9.5" ry="8" fill="#6cc04a"/><circle cx="245.5" cy="694" r="1.3" fill="#1a4a10"/><circle cx="252.5" cy="694" r="1.3" fill="#1a4a10"/>
<ellipse cx="259" cy="703" rx="8.5" ry="7" fill="#fafafa" stroke="#d8d8d8" stroke-width="0.8"/><circle cx="256.5" cy="701.5" r="1" fill="#777"/><circle cx="261.5" cy="701.5" r="1" fill="#777"/>
<circle cx="315.3" cy="699.8" r="14" fill="url(#org)"/><path d="M306,704 q2,-10 10,-12 q8,-2 12,4 q-4,0 -6,3 q2,4 -3,8 q-5,2 -8,-1 q-3,-1 -5,-2z" fill="#f8ecd8"/>
<text x="1205.5" y="714" font-family="Liberation Sans" font-size="12.3" fill="#eef3f8">2019/7/7</text>
<rect x="1266" y="682" width="13" height="35" fill="#7890aa"/><rect x="1266" y="682" width="1" height="35" fill="#5c7088"/><rect x="1267" y="682" width="1" height="35" fill="#a8b8c8"/>
</svg>
<svg class="a" style="left:0;top:0" width="1279" height="717" viewBox="0 0 1279 717">
<path d="M1077.5,660.0 C1078.6,654.6 1079.8,651.9 1083.0,650.0 C1086.2,648.1 1093.8,650.4 1097.0,648.5 C1100.2,646.6 1099.5,640.6 1102.0,638.5 C1104.5,636.4 1108.8,636.1 1112.0,636.0 C1115.2,635.9 1118.7,636.0 1121.0,638.0 C1123.3,640.0 1122.8,646.2 1126.0,648.0 C1129.2,649.8 1136.0,648.7 1140.0,648.5 C1144.0,648.3 1147.5,648.3 1150.0,647.0 C1152.5,645.7 1152.3,641.9 1155.0,640.5 C1157.7,639.1 1162.3,638.6 1166.0,638.5 C1169.7,638.4 1173.9,638.4 1177.0,640.0 C1180.1,641.6 1180.0,646.4 1184.5,648.0 C1189.0,649.6 1199.8,649.5 1204.0,649.5 C1208.2,649.5 1204.8,648.2 1210.0,648.0 C1215.2,647.8 1227.0,648.0 1235.0,648.0 C1243.0,648.0 1252.3,646.9 1258.0,648.0 C1263.7,649.1 1266.7,651.2 1269.0,654.5 C1271.3,657.8 1271.6,662.1 1272.0,667.5 C1272.4,672.9 1272.5,682.1 1271.5,687.0 C1270.5,691.9 1269.6,695.1 1266.0,697.0 C1262.4,698.9 1257.0,698.5 1249.7,698.5 C1242.4,698.5 1230.2,697.6 1222.0,697.0 C1213.8,696.4 1205.4,695.7 1200.7,695.0 C1196.0,694.3 1196.2,692.1 1194.0,693.0 C1191.8,693.9 1190.8,697.7 1187.6,700.2 C1184.4,702.8 1181.9,706.9 1174.6,708.3 C1167.2,709.6 1151.7,708.3 1143.5,708.3 C1135.3,708.3 1131.0,707.9 1125.6,708.3 C1120.1,708.7 1117.3,710.5 1110.8,710.5 C1104.2,710.5 1091.7,709.8 1086.3,708.3 C1080.9,706.8 1079.8,706.1 1078.2,701.8 C1076.6,697.4 1076.6,689.2 1076.5,682.2 C1076.4,675.2 1076.4,665.4 1077.5,660.0 Z" fill="#dcdcdc" stroke="#c6c6c6" stroke-width="1.6"/>
<g fill="none" stroke="#0a0a0a" stroke-width="5.8" stroke-linecap="round" stroke-linejoin="round"><path d="M1091.1,661 Q1089.5,676 1090.6,680.5 Q1092,684 1096,682"/><path d="M1100.4,661 Q1098,678 1094.5,689.6 Q1091,697 1087.2,697.4"/><path d="M1111.6,648 L1105.4,685.7"/><path d="M1117,659.5 L1108.2,672 L1115,685.7"/><path d="M1125.7,661.5 L1120.9,698.4"/><path d="M1125,665 Q1134,659 1136,667 Q1137,681 1122.5,683"/><path d="M1146,662 Q1139.5,664 1140,678 Q1141.5,687 1147,685 Q1152.5,680 1151.5,668 Q1150.5,661 1146,662"/><path d="M1163,664.5 L1157,694.5 Q1155,699.5 1152.5,698.5"/><path d="M1171,662.5 L1167.7,686.5"/><path d="M1179.2,673.5 Q1187.6,670 1187.6,665 Q1186,661 1182,662.5 Q1176.5,667 1176.7,680 Q1177.5,687 1182,686.5 Q1186,685 1188.9,681.5"/><path d="M1215.5,662.5 Q1212.5,659.5 1209.5,663 Q1205,670 1205.5,680 Q1207,687 1211.5,685.5"/><path d="M1227,660 Q1220.5,662 1220.5,676 Q1221,687.5 1227,686 Q1234,681 1233.5,668 Q1232.5,659.5 1227,660"/><path d="M1239.5,661 L1237.5,686.5 M1238.6,670 Q1242,660 1246.5,661.5 Q1249.5,664 1248.5,672 L1247,686.5 M1248.5,670 Q1252,660 1256.5,661.5 Q1259.5,664 1259,672 L1257.5,686.5"/></g>
<g fill="#0a0a0a"><ellipse cx="1163" cy="653.8" rx="2.9" ry="3.4"/><ellipse cx="1172.6" cy="652.6" rx="2.9" ry="3.4"/><ellipse cx="1196.8" cy="668" rx="3.3" ry="3.8"/></g>
</svg>
</body></html>
